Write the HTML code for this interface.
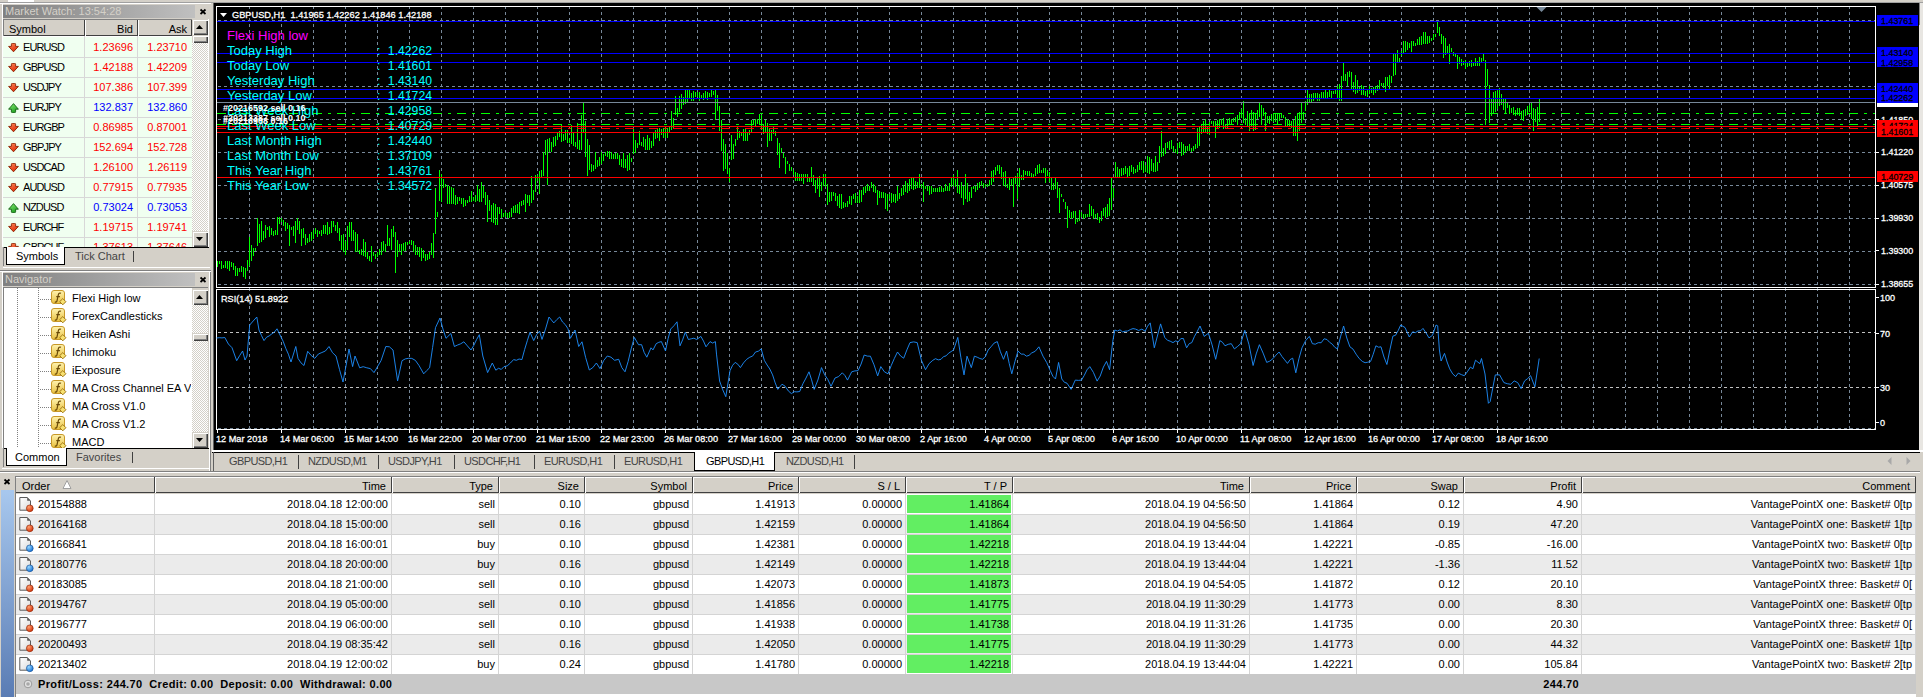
<!DOCTYPE html><html><head><meta charset="utf-8"><style>
html,body{margin:0;padding:0;}
body{width:1923px;height:697px;overflow:hidden;position:relative;background:#d4d0c8;font-family:"Liberation Sans", sans-serif;font-size:11px;color:#000;}
.t{font-size:11px;line-height:13px;}
svg{position:absolute;}

</style></head><body>
<div style="position:absolute;left:8px;top:0px;width:26px;height:2px;background:#fff"></div>
<div style="position:absolute;left:0px;top:2px;width:1923px;height:1px;background:#a0a0a0"></div>
<div style="position:absolute;left:0px;top:3px;width:211px;height:1px;background:#fff"></div>
<div style="position:absolute;left:3px;top:5px;width:192px;height:13px;background:linear-gradient(to right,#808080,#c0c0c0)"></div>
<div style="position:absolute;left:5px;top:5px;white-space:nowrap;color:#d4d0c8;font-size:11px;line-height:13px">Market Watch: 13:54:28</div>
<svg style="left:199px;top:8px" width="9" height="8"><path d="M1.5 1.5l5 4.5M6.5 1.5l-5 4.5" stroke="#000" stroke-width="1.7"/></svg>
<div style="position:absolute;left:2px;top:4px;width:1px;height:243px;background:#fff"></div>
<div style="position:absolute;left:3px;top:19px;width:189px;height:17px;background:#d4d0c8;box-shadow:inset 1px 1px 0 #fff, inset -1px -1px 0 #404040"></div>
<div style="position:absolute;left:84px;top:19px;width:1px;height:17px;background:#404040"></div>
<div style="position:absolute;left:85px;top:19px;width:1px;height:17px;background:#fff"></div>
<div style="position:absolute;left:137px;top:19px;width:1px;height:17px;background:#404040"></div>
<div style="position:absolute;left:138px;top:19px;width:1px;height:17px;background:#fff"></div>
<div class="t" style="position:absolute;left:9px;top:23px;white-space:nowrap;">Symbol</div>
<div class="t" style="position:absolute;right:1790px;top:23px;white-space:nowrap;text-align:right;">Bid</div>
<div class="t" style="position:absolute;right:1736px;top:23px;white-space:nowrap;text-align:right;">Ask</div>
<div style="position:absolute;left:3px;top:19px;width:205px;height:1px;background:#808080"></div>
<div style="position:absolute;left:208px;top:19px;width:1px;height:228px;background:#fff"></div>
<div style="position:absolute;left:3px;top:19px;width:1px;height:228px;background:#808080"></div>
<div style="position:absolute;left:3px;top:36px;width:189px;height:211px;overflow:hidden;background:#f0fff0">
<div style="position:absolute;left:0;top:0;width:189px;height:1px;background:#fff"></div>
<div style="position:absolute;left:0;top:21px;width:189px;height:1px;background:#d8d8d8"></div>
<svg style="left:5px;top:7px" width="11" height="10" viewBox="0 0 11 10"><defs><linearGradient id="rg0" x1="0" y1="0" x2="0.6" y2="1"><stop offset="0" stop-color="#ff8a5a"/><stop offset="1" stop-color="#e02c08"/></linearGradient></defs><path d="M3.4 1.2q0-0.8 0.8-0.8h2.6q0.8 0 0.8 0.8V3.4H10.4L5.5 8.8L0.6 3.4H3.4z" fill="url(#rg0)" stroke="#8a2000" stroke-width="0.9" stroke-linejoin="round"/></svg>
<div class="t" style="position:absolute;left:20px;top:5px;letter-spacing:-0.9px">EURUSD</div>
<div class="t" style="position:absolute;right:59px;top:5px;color:#ff0000">1.23696</div>
<div class="t" style="position:absolute;right:5px;top:5px;color:#ff0000">1.23710</div>
<div style="position:absolute;left:0;top:41px;width:189px;height:1px;background:#d8d8d8"></div>
<svg style="left:5px;top:27px" width="11" height="10" viewBox="0 0 11 10"><defs><linearGradient id="rg1" x1="0" y1="0" x2="0.6" y2="1"><stop offset="0" stop-color="#ff8a5a"/><stop offset="1" stop-color="#e02c08"/></linearGradient></defs><path d="M3.4 1.2q0-0.8 0.8-0.8h2.6q0.8 0 0.8 0.8V3.4H10.4L5.5 8.8L0.6 3.4H3.4z" fill="url(#rg1)" stroke="#8a2000" stroke-width="0.9" stroke-linejoin="round"/></svg>
<div class="t" style="position:absolute;left:20px;top:25px;letter-spacing:-0.9px">GBPUSD</div>
<div class="t" style="position:absolute;right:59px;top:25px;color:#ff0000">1.42188</div>
<div class="t" style="position:absolute;right:5px;top:25px;color:#ff0000">1.42209</div>
<div style="position:absolute;left:0;top:61px;width:189px;height:1px;background:#d8d8d8"></div>
<svg style="left:5px;top:47px" width="11" height="10" viewBox="0 0 11 10"><defs><linearGradient id="rg2" x1="0" y1="0" x2="0.6" y2="1"><stop offset="0" stop-color="#ff8a5a"/><stop offset="1" stop-color="#e02c08"/></linearGradient></defs><path d="M3.4 1.2q0-0.8 0.8-0.8h2.6q0.8 0 0.8 0.8V3.4H10.4L5.5 8.8L0.6 3.4H3.4z" fill="url(#rg2)" stroke="#8a2000" stroke-width="0.9" stroke-linejoin="round"/></svg>
<div class="t" style="position:absolute;left:20px;top:45px;letter-spacing:-0.9px">USDJPY</div>
<div class="t" style="position:absolute;right:59px;top:45px;color:#ff0000">107.386</div>
<div class="t" style="position:absolute;right:5px;top:45px;color:#ff0000">107.399</div>
<div style="position:absolute;left:0;top:81px;width:189px;height:1px;background:#d8d8d8"></div>
<svg style="left:5px;top:67px" width="11" height="10" viewBox="0 0 11 10"><defs><linearGradient id="gg3" x1="0" y1="0" x2="0.6" y2="1"><stop offset="0" stop-color="#8aef7a"/><stop offset="1" stop-color="#20a020"/></linearGradient></defs><path d="M3.4 8.8q0 0.8 0.8 0.8h2.6q0.8 0 0.8-0.8V6.2H10.4L5.5 0.6L0.6 6.2H3.4z" fill="url(#gg3)" stroke="#106010" stroke-width="0.9" stroke-linejoin="round"/></svg>
<div class="t" style="position:absolute;left:20px;top:65px;letter-spacing:-0.9px">EURJPY</div>
<div class="t" style="position:absolute;right:59px;top:65px;color:#0000ff">132.837</div>
<div class="t" style="position:absolute;right:5px;top:65px;color:#0000ff">132.860</div>
<div style="position:absolute;left:0;top:101px;width:189px;height:1px;background:#d8d8d8"></div>
<svg style="left:5px;top:87px" width="11" height="10" viewBox="0 0 11 10"><defs><linearGradient id="rg4" x1="0" y1="0" x2="0.6" y2="1"><stop offset="0" stop-color="#ff8a5a"/><stop offset="1" stop-color="#e02c08"/></linearGradient></defs><path d="M3.4 1.2q0-0.8 0.8-0.8h2.6q0.8 0 0.8 0.8V3.4H10.4L5.5 8.8L0.6 3.4H3.4z" fill="url(#rg4)" stroke="#8a2000" stroke-width="0.9" stroke-linejoin="round"/></svg>
<div class="t" style="position:absolute;left:20px;top:85px;letter-spacing:-0.9px">EURGBP</div>
<div class="t" style="position:absolute;right:59px;top:85px;color:#ff0000">0.86985</div>
<div class="t" style="position:absolute;right:5px;top:85px;color:#ff0000">0.87001</div>
<div style="position:absolute;left:0;top:121px;width:189px;height:1px;background:#d8d8d8"></div>
<svg style="left:5px;top:107px" width="11" height="10" viewBox="0 0 11 10"><defs><linearGradient id="rg5" x1="0" y1="0" x2="0.6" y2="1"><stop offset="0" stop-color="#ff8a5a"/><stop offset="1" stop-color="#e02c08"/></linearGradient></defs><path d="M3.4 1.2q0-0.8 0.8-0.8h2.6q0.8 0 0.8 0.8V3.4H10.4L5.5 8.8L0.6 3.4H3.4z" fill="url(#rg5)" stroke="#8a2000" stroke-width="0.9" stroke-linejoin="round"/></svg>
<div class="t" style="position:absolute;left:20px;top:105px;letter-spacing:-0.9px">GBPJPY</div>
<div class="t" style="position:absolute;right:59px;top:105px;color:#ff0000">152.694</div>
<div class="t" style="position:absolute;right:5px;top:105px;color:#ff0000">152.728</div>
<div style="position:absolute;left:0;top:141px;width:189px;height:1px;background:#d8d8d8"></div>
<svg style="left:5px;top:127px" width="11" height="10" viewBox="0 0 11 10"><defs><linearGradient id="rg6" x1="0" y1="0" x2="0.6" y2="1"><stop offset="0" stop-color="#ff8a5a"/><stop offset="1" stop-color="#e02c08"/></linearGradient></defs><path d="M3.4 1.2q0-0.8 0.8-0.8h2.6q0.8 0 0.8 0.8V3.4H10.4L5.5 8.8L0.6 3.4H3.4z" fill="url(#rg6)" stroke="#8a2000" stroke-width="0.9" stroke-linejoin="round"/></svg>
<div class="t" style="position:absolute;left:20px;top:125px;letter-spacing:-0.9px">USDCAD</div>
<div class="t" style="position:absolute;right:59px;top:125px;color:#ff0000">1.26100</div>
<div class="t" style="position:absolute;right:5px;top:125px;color:#ff0000">1.26119</div>
<div style="position:absolute;left:0;top:161px;width:189px;height:1px;background:#d8d8d8"></div>
<svg style="left:5px;top:147px" width="11" height="10" viewBox="0 0 11 10"><defs><linearGradient id="rg7" x1="0" y1="0" x2="0.6" y2="1"><stop offset="0" stop-color="#ff8a5a"/><stop offset="1" stop-color="#e02c08"/></linearGradient></defs><path d="M3.4 1.2q0-0.8 0.8-0.8h2.6q0.8 0 0.8 0.8V3.4H10.4L5.5 8.8L0.6 3.4H3.4z" fill="url(#rg7)" stroke="#8a2000" stroke-width="0.9" stroke-linejoin="round"/></svg>
<div class="t" style="position:absolute;left:20px;top:145px;letter-spacing:-0.9px">AUDUSD</div>
<div class="t" style="position:absolute;right:59px;top:145px;color:#ff0000">0.77915</div>
<div class="t" style="position:absolute;right:5px;top:145px;color:#ff0000">0.77935</div>
<div style="position:absolute;left:0;top:181px;width:189px;height:1px;background:#d8d8d8"></div>
<svg style="left:5px;top:167px" width="11" height="10" viewBox="0 0 11 10"><defs><linearGradient id="gg8" x1="0" y1="0" x2="0.6" y2="1"><stop offset="0" stop-color="#8aef7a"/><stop offset="1" stop-color="#20a020"/></linearGradient></defs><path d="M3.4 8.8q0 0.8 0.8 0.8h2.6q0.8 0 0.8-0.8V6.2H10.4L5.5 0.6L0.6 6.2H3.4z" fill="url(#gg8)" stroke="#106010" stroke-width="0.9" stroke-linejoin="round"/></svg>
<div class="t" style="position:absolute;left:20px;top:165px;letter-spacing:-0.9px">NZDUSD</div>
<div class="t" style="position:absolute;right:59px;top:165px;color:#0000ff">0.73024</div>
<div class="t" style="position:absolute;right:5px;top:165px;color:#0000ff">0.73053</div>
<div style="position:absolute;left:0;top:201px;width:189px;height:1px;background:#d8d8d8"></div>
<svg style="left:5px;top:187px" width="11" height="10" viewBox="0 0 11 10"><defs><linearGradient id="rg9" x1="0" y1="0" x2="0.6" y2="1"><stop offset="0" stop-color="#ff8a5a"/><stop offset="1" stop-color="#e02c08"/></linearGradient></defs><path d="M3.4 1.2q0-0.8 0.8-0.8h2.6q0.8 0 0.8 0.8V3.4H10.4L5.5 8.8L0.6 3.4H3.4z" fill="url(#rg9)" stroke="#8a2000" stroke-width="0.9" stroke-linejoin="round"/></svg>
<div class="t" style="position:absolute;left:20px;top:185px;letter-spacing:-0.9px">EURCHF</div>
<div class="t" style="position:absolute;right:59px;top:185px;color:#ff0000">1.19715</div>
<div class="t" style="position:absolute;right:5px;top:185px;color:#ff0000">1.19741</div>
<div style="position:absolute;left:0;top:221px;width:189px;height:1px;background:#d8d8d8"></div>
<svg style="left:5px;top:207px" width="11" height="10" viewBox="0 0 11 10"><defs><linearGradient id="rg10" x1="0" y1="0" x2="0.6" y2="1"><stop offset="0" stop-color="#ff8a5a"/><stop offset="1" stop-color="#e02c08"/></linearGradient></defs><path d="M3.4 1.2q0-0.8 0.8-0.8h2.6q0.8 0 0.8 0.8V3.4H10.4L5.5 8.8L0.6 3.4H3.4z" fill="url(#rg10)" stroke="#8a2000" stroke-width="0.9" stroke-linejoin="round"/></svg>
<div class="t" style="position:absolute;left:20px;top:205px;letter-spacing:-0.9px">GBPCHF</div>
<div class="t" style="position:absolute;right:59px;top:205px;color:#ff0000">1.37613</div>
<div class="t" style="position:absolute;right:5px;top:205px;color:#ff0000">1.37646</div>
<div style="position:absolute;left:81px;top:0;width:1px;height:211px;background:#d8d8d8"></div>
<div style="position:absolute;left:134px;top:0;width:1px;height:211px;background:#d8d8d8"></div>
</div>
<div style="position:absolute;left:192px;top:19px;width:16px;height:228px;background-color:#ece9e4;background-image:repeating-conic-gradient(#d4d0c8 0 25%, #fff 0 50%);background-size:2px 2px"></div>
<div style="position:absolute;left:192px;top:19px;width:16px;height:16px;background:#d4d0c8;box-shadow:inset 1px 1px 0 #d4d0c8, inset 2px 2px 0 #fff, inset -1px -1px 0 #404040, inset -2px -2px 0 #808080"></div>
<svg style="left:192px;top:19px" width="16" height="16"><path d="M4 10h7l-3.5-4z" fill="#000"/></svg>
<div style="position:absolute;left:192px;top:231px;width:16px;height:16px;background:#d4d0c8;box-shadow:inset 1px 1px 0 #d4d0c8, inset 2px 2px 0 #fff, inset -1px -1px 0 #404040, inset -2px -2px 0 #808080"></div>
<svg style="left:192px;top:231px" width="16" height="16"><path d="M4 6h7l-3.5 4z" fill="#000"/></svg>
<div style="position:absolute;left:192px;top:35px;width:16px;height:8px;background:#d4d0c8;box-shadow:inset 1px 1px 0 #d4d0c8, inset 2px 2px 0 #fff, inset -1px -1px 0 #404040, inset -2px -2px 0 #808080"></div>
<div style="position:absolute;left:3px;top:247px;width:206px;height:1px;background:#000"></div>
<div style="position:absolute;left:3px;top:247px;width:1px;height:19px;background:#808080"></div>
<div style="position:absolute;left:6px;top:247px;width:59px;height:18px;background:#fff;border:1px solid #000;border-top:none;box-sizing:border-box"></div>
<div class="t" style="position:absolute;left:16px;top:250px;white-space:nowrap;">Symbols</div>
<div class="t" style="position:absolute;left:75px;top:250px;white-space:nowrap;color:#444">Tick Chart</div>
<div style="position:absolute;left:133px;top:251px;width:1px;height:11px;background:#404040"></div>
<div style="position:absolute;left:3px;top:267px;width:207px;height:1px;background:#fff"></div>
<div style="position:absolute;left:0px;top:270px;width:211px;height:1px;background:#808080"></div>
<div style="position:absolute;left:0px;top:271px;width:211px;height:1px;background:#fff"></div>
<div style="position:absolute;left:3px;top:273px;width:192px;height:13px;background:linear-gradient(to right,#808080,#c0c0c0)"></div>
<div style="position:absolute;left:5px;top:273px;white-space:nowrap;color:#d4d0c8;font-size:11px;line-height:13px">Navigator</div>
<svg style="left:199px;top:276px" width="9" height="8"><path d="M1.5 1.5l5 4.5M6.5 1.5l-5 4.5" stroke="#000" stroke-width="1.7"/></svg>
<div style="position:absolute;left:2px;top:272px;width:1px;height:176px;background:#fff"></div>
<div style="position:absolute;left:209px;top:272px;width:1px;height:200px;background:#fff"></div>
<div style="position:absolute;left:210px;top:272px;width:1px;height:200px;background:#808080"></div>
<div style="position:absolute;left:3px;top:288px;width:189px;height:160px;background:#fff"></div>
<div style="position:absolute;left:3px;top:287px;width:205px;height:1px;background:#808080"></div>
<div style="position:absolute;left:3px;top:287px;width:1px;height:161px;background:#808080"></div>
<svg style="left:0;top:288px" width="192" height="160">
<path d="M17.5 0V160M38.5 0V160" stroke="#808080" stroke-width="1" stroke-dasharray="1 1"/>
<path d="M40 11.5H51" stroke="#808080" stroke-dasharray="1 1"/>
<path d="M40 29.5H51" stroke="#808080" stroke-dasharray="1 1"/>
<path d="M40 47.5H51" stroke="#808080" stroke-dasharray="1 1"/>
<path d="M40 65.5H51" stroke="#808080" stroke-dasharray="1 1"/>
<path d="M40 83.5H51" stroke="#808080" stroke-dasharray="1 1"/>
<path d="M40 101.5H51" stroke="#808080" stroke-dasharray="1 1"/>
<path d="M40 119.5H51" stroke="#808080" stroke-dasharray="1 1"/>
<path d="M40 137.5H51" stroke="#808080" stroke-dasharray="1 1"/>
<path d="M40 155.5H51" stroke="#808080" stroke-dasharray="1 1"/>
</svg>
<svg style="left:51px;top:290px" width="17" height="17" viewBox="0 0 17 17"><defs><linearGradient id="yg" x1="0" y1="0" x2="0" y2="1"><stop offset="0" stop-color="#fff3b0"/><stop offset="1" stop-color="#e8c040"/></linearGradient></defs><rect x="0.5" y="0.5" width="13" height="13" rx="2.5" fill="url(#yg)" stroke="#c89828"/><path d="M10 3.3c-1.4-0.7-2.4 0-2.7 1.5l-1.3 6c-0.3 1.2-1.1 1.6-2.2 1.1M5.3 6.6h3.6" stroke="#6a4a08" stroke-width="1.2" fill="none"/><path d="M11.8 8.6l3.1 3.1-3.1 3.1-3.1-3.1z" fill="#f8e070" stroke="#a07818" stroke-width="1"/></svg>
<div class="t" style="position:absolute;left:72px;top:292px;width:119px;overflow:hidden;white-space:nowrap">Flexi High low</div>
<svg style="left:51px;top:308px" width="17" height="17" viewBox="0 0 17 17"><defs><linearGradient id="yg" x1="0" y1="0" x2="0" y2="1"><stop offset="0" stop-color="#fff3b0"/><stop offset="1" stop-color="#e8c040"/></linearGradient></defs><rect x="0.5" y="0.5" width="13" height="13" rx="2.5" fill="url(#yg)" stroke="#c89828"/><path d="M10 3.3c-1.4-0.7-2.4 0-2.7 1.5l-1.3 6c-0.3 1.2-1.1 1.6-2.2 1.1M5.3 6.6h3.6" stroke="#6a4a08" stroke-width="1.2" fill="none"/><path d="M11.8 8.6l3.1 3.1-3.1 3.1-3.1-3.1z" fill="#f8e070" stroke="#a07818" stroke-width="1"/></svg>
<div class="t" style="position:absolute;left:72px;top:310px;width:119px;overflow:hidden;white-space:nowrap">ForexCandlesticks</div>
<svg style="left:51px;top:326px" width="17" height="17" viewBox="0 0 17 17"><defs><linearGradient id="yg" x1="0" y1="0" x2="0" y2="1"><stop offset="0" stop-color="#fff3b0"/><stop offset="1" stop-color="#e8c040"/></linearGradient></defs><rect x="0.5" y="0.5" width="13" height="13" rx="2.5" fill="url(#yg)" stroke="#c89828"/><path d="M10 3.3c-1.4-0.7-2.4 0-2.7 1.5l-1.3 6c-0.3 1.2-1.1 1.6-2.2 1.1M5.3 6.6h3.6" stroke="#6a4a08" stroke-width="1.2" fill="none"/><path d="M11.8 8.6l3.1 3.1-3.1 3.1-3.1-3.1z" fill="#f8e070" stroke="#a07818" stroke-width="1"/></svg>
<div class="t" style="position:absolute;left:72px;top:328px;width:119px;overflow:hidden;white-space:nowrap">Heiken Ashi</div>
<svg style="left:51px;top:344px" width="17" height="17" viewBox="0 0 17 17"><defs><linearGradient id="yg" x1="0" y1="0" x2="0" y2="1"><stop offset="0" stop-color="#fff3b0"/><stop offset="1" stop-color="#e8c040"/></linearGradient></defs><rect x="0.5" y="0.5" width="13" height="13" rx="2.5" fill="url(#yg)" stroke="#c89828"/><path d="M10 3.3c-1.4-0.7-2.4 0-2.7 1.5l-1.3 6c-0.3 1.2-1.1 1.6-2.2 1.1M5.3 6.6h3.6" stroke="#6a4a08" stroke-width="1.2" fill="none"/><path d="M11.8 8.6l3.1 3.1-3.1 3.1-3.1-3.1z" fill="#f8e070" stroke="#a07818" stroke-width="1"/></svg>
<div class="t" style="position:absolute;left:72px;top:346px;width:119px;overflow:hidden;white-space:nowrap">Ichimoku</div>
<svg style="left:51px;top:362px" width="17" height="17" viewBox="0 0 17 17"><defs><linearGradient id="yg" x1="0" y1="0" x2="0" y2="1"><stop offset="0" stop-color="#fff3b0"/><stop offset="1" stop-color="#e8c040"/></linearGradient></defs><rect x="0.5" y="0.5" width="13" height="13" rx="2.5" fill="url(#yg)" stroke="#c89828"/><path d="M10 3.3c-1.4-0.7-2.4 0-2.7 1.5l-1.3 6c-0.3 1.2-1.1 1.6-2.2 1.1M5.3 6.6h3.6" stroke="#6a4a08" stroke-width="1.2" fill="none"/><path d="M11.8 8.6l3.1 3.1-3.1 3.1-3.1-3.1z" fill="#f8e070" stroke="#a07818" stroke-width="1"/></svg>
<div class="t" style="position:absolute;left:72px;top:364px;width:119px;overflow:hidden;white-space:nowrap">iExposure</div>
<svg style="left:51px;top:380px" width="17" height="17" viewBox="0 0 17 17"><defs><linearGradient id="yg" x1="0" y1="0" x2="0" y2="1"><stop offset="0" stop-color="#fff3b0"/><stop offset="1" stop-color="#e8c040"/></linearGradient></defs><rect x="0.5" y="0.5" width="13" height="13" rx="2.5" fill="url(#yg)" stroke="#c89828"/><path d="M10 3.3c-1.4-0.7-2.4 0-2.7 1.5l-1.3 6c-0.3 1.2-1.1 1.6-2.2 1.1M5.3 6.6h3.6" stroke="#6a4a08" stroke-width="1.2" fill="none"/><path d="M11.8 8.6l3.1 3.1-3.1 3.1-3.1-3.1z" fill="#f8e070" stroke="#a07818" stroke-width="1"/></svg>
<div class="t" style="position:absolute;left:72px;top:382px;width:119px;overflow:hidden;white-space:nowrap">MA Cross Channel EA V1.0</div>
<svg style="left:51px;top:398px" width="17" height="17" viewBox="0 0 17 17"><defs><linearGradient id="yg" x1="0" y1="0" x2="0" y2="1"><stop offset="0" stop-color="#fff3b0"/><stop offset="1" stop-color="#e8c040"/></linearGradient></defs><rect x="0.5" y="0.5" width="13" height="13" rx="2.5" fill="url(#yg)" stroke="#c89828"/><path d="M10 3.3c-1.4-0.7-2.4 0-2.7 1.5l-1.3 6c-0.3 1.2-1.1 1.6-2.2 1.1M5.3 6.6h3.6" stroke="#6a4a08" stroke-width="1.2" fill="none"/><path d="M11.8 8.6l3.1 3.1-3.1 3.1-3.1-3.1z" fill="#f8e070" stroke="#a07818" stroke-width="1"/></svg>
<div class="t" style="position:absolute;left:72px;top:400px;width:119px;overflow:hidden;white-space:nowrap">MA Cross V1.0</div>
<svg style="left:51px;top:416px" width="17" height="17" viewBox="0 0 17 17"><defs><linearGradient id="yg" x1="0" y1="0" x2="0" y2="1"><stop offset="0" stop-color="#fff3b0"/><stop offset="1" stop-color="#e8c040"/></linearGradient></defs><rect x="0.5" y="0.5" width="13" height="13" rx="2.5" fill="url(#yg)" stroke="#c89828"/><path d="M10 3.3c-1.4-0.7-2.4 0-2.7 1.5l-1.3 6c-0.3 1.2-1.1 1.6-2.2 1.1M5.3 6.6h3.6" stroke="#6a4a08" stroke-width="1.2" fill="none"/><path d="M11.8 8.6l3.1 3.1-3.1 3.1-3.1-3.1z" fill="#f8e070" stroke="#a07818" stroke-width="1"/></svg>
<div class="t" style="position:absolute;left:72px;top:418px;width:119px;overflow:hidden;white-space:nowrap">MA Cross V1.2</div>
<svg style="left:51px;top:434px" width="17" height="17" viewBox="0 0 17 17"><defs><linearGradient id="yg" x1="0" y1="0" x2="0" y2="1"><stop offset="0" stop-color="#fff3b0"/><stop offset="1" stop-color="#e8c040"/></linearGradient></defs><rect x="0.5" y="0.5" width="13" height="13" rx="2.5" fill="url(#yg)" stroke="#c89828"/><path d="M10 3.3c-1.4-0.7-2.4 0-2.7 1.5l-1.3 6c-0.3 1.2-1.1 1.6-2.2 1.1M5.3 6.6h3.6" stroke="#6a4a08" stroke-width="1.2" fill="none"/><path d="M11.8 8.6l3.1 3.1-3.1 3.1-3.1-3.1z" fill="#f8e070" stroke="#a07818" stroke-width="1"/></svg>
<div class="t" style="position:absolute;left:72px;top:436px;width:119px;overflow:hidden;white-space:nowrap">MACD</div>
<div style="position:absolute;left:192px;top:289px;width:16px;height:159px;background-color:#ece9e4;background-image:repeating-conic-gradient(#d4d0c8 0 25%, #fff 0 50%);background-size:2px 2px"></div>
<div style="position:absolute;left:192px;top:289px;width:16px;height:16px;background:#d4d0c8;box-shadow:inset 1px 1px 0 #d4d0c8, inset 2px 2px 0 #fff, inset -1px -1px 0 #404040, inset -2px -2px 0 #808080"></div>
<svg style="left:192px;top:289px" width="16" height="16"><path d="M4 10h7l-3.5-4z" fill="#000"/></svg>
<div style="position:absolute;left:192px;top:432px;width:16px;height:16px;background:#d4d0c8;box-shadow:inset 1px 1px 0 #d4d0c8, inset 2px 2px 0 #fff, inset -1px -1px 0 #404040, inset -2px -2px 0 #808080"></div>
<svg style="left:192px;top:432px" width="16" height="16"><path d="M4 6h7l-3.5 4z" fill="#000"/></svg>
<div style="position:absolute;left:192px;top:333px;width:16px;height:8px;background:#d4d0c8;box-shadow:inset 1px 1px 0 #d4d0c8, inset 2px 2px 0 #fff, inset -1px -1px 0 #404040, inset -2px -2px 0 #808080"></div>
<div style="position:absolute;left:3px;top:448px;width:206px;height:1px;background:#000"></div>
<div style="position:absolute;left:3px;top:448px;width:1px;height:19px;background:#808080"></div>
<div style="position:absolute;left:6px;top:448px;width:61px;height:18px;background:#fff;border:1px solid #000;border-top:none;box-sizing:border-box"></div>
<div class="t" style="position:absolute;left:15px;top:451px;white-space:nowrap;">Common</div>
<div class="t" style="position:absolute;left:76px;top:451px;white-space:nowrap;color:#444">Favorites</div>
<div style="position:absolute;left:132px;top:452px;width:1px;height:11px;background:#404040"></div>
<div style="position:absolute;left:2px;top:468px;width:208px;height:1px;background:#fff"></div>
<svg style="left:211px;top:3px" width="1712" height="447" viewBox="211 3 1712 447" shape-rendering="crispEdges">
<rect x="211" y="3" width="2" height="447" fill="#d4d0c8"/>
<rect x="213" y="3" width="1" height="447" fill="#606060"/>
<rect x="214" y="3" width="1705" height="447" fill="#000"/>
<rect x="1919" y="3" width="4" height="447" fill="#e8e6e2"/>
<rect x="1919" y="3" width="1" height="22" fill="#808080"/>
<path d="M249.5 6V287M281.5 6V287M313.5 6V287M345.5 6V287M377.5 6V287M409.5 6V287M441.5 6V287M473.5 6V287M505.5 6V287M537.5 6V287M569.5 6V287M601.5 6V287M633.5 6V287M665.5 6V287M697.5 6V287M729.5 6V287M761.5 6V287M793.5 6V287M825.5 6V287M857.5 6V287M889.5 6V287M921.5 6V287M953.5 6V287M985.5 6V287M1017.5 6V287M1049.5 6V287M1081.5 6V287M1113.5 6V287M1145.5 6V287M1177.5 6V287M1209.5 6V287M1241.5 6V287M1273.5 6V287M1305.5 6V287M1337.5 6V287M1369.5 6V287M1401.5 6V287M1433.5 6V287M1465.5 6V287M1497.5 6V287M1529.5 6V287M1561.5 6V287M1593.5 6V287M1625.5 6V287M1657.5 6V287M1689.5 6V287M1721.5 6V287M1753.5 6V287M1785.5 6V287M1817.5 6V287M1849.5 6V287" stroke="#778899" stroke-dasharray="3 3" fill="none"/>
<path d="M249.5 288V429M281.5 288V429M313.5 288V429M345.5 288V429M377.5 288V429M409.5 288V429M441.5 288V429M473.5 288V429M505.5 288V429M537.5 288V429M569.5 288V429M601.5 288V429M633.5 288V429M665.5 288V429M697.5 288V429M729.5 288V429M761.5 288V429M793.5 288V429M825.5 288V429M857.5 288V429M889.5 288V429M921.5 288V429M953.5 288V429M985.5 288V429M1017.5 288V429M1049.5 288V429M1081.5 288V429M1113.5 288V429M1145.5 288V429M1177.5 288V429M1209.5 288V429M1241.5 288V429M1273.5 288V429M1305.5 288V429M1337.5 288V429M1369.5 288V429M1401.5 288V429M1433.5 288V429M1465.5 288V429M1497.5 288V429M1529.5 288V429M1561.5 288V429M1593.5 288V429M1625.5 288V429M1657.5 288V429M1689.5 288V429M1721.5 288V429M1753.5 288V429M1785.5 288V429M1817.5 288V429M1849.5 288V429" stroke="#778899" stroke-dasharray="3 3" fill="none"/>
<path d="M218 20.5H1875M218 53.5H1875M218 86.5H1875M218 119.5H1875M218 152.5H1875M218 185.5H1875M218 218.5H1875M218 251.5H1875M218 284.5H1875" stroke="#778899" stroke-dasharray="3 3" fill="none"/>
<path d="M218 332.5H1875M218 387.5H1875" stroke="#c0c0c0" stroke-dasharray="3 3" fill="none"/>
<path d="M218 428.5H1875" stroke="#778899" stroke-dasharray="3 3" fill="none"/>
<path d="M217.5 261V267M219.5 261V264M221.5 261V269M223.5 265V268M225.5 261V268M227.5 261V269M229.5 261V271M231.5 262V267M233.5 263V270M235.5 266V276M237.5 268V276M239.5 268V272M241.5 266V272M243.5 267V277M245.5 268V279M247.5 260V271M249.5 237V266M251.5 245V261M253.5 248V256M255.5 248V251M257.5 218V246M259.5 224V243M261.5 221V242M263.5 231V240M265.5 225V238M267.5 227V230M269.5 226V237M271.5 228V235M273.5 231V236M275.5 230V235M277.5 217V235M279.5 217V224M281.5 218V222M283.5 220V226M285.5 222V231M287.5 223V229M289.5 225V246M291.5 227V230M293.5 226V236M295.5 221V243M297.5 218V230M299.5 221V234M301.5 229V246M303.5 228V238M305.5 234V245M307.5 238V243M309.5 234V242M311.5 232V241M313.5 230V239M315.5 228V234M317.5 230V237M319.5 231V234M321.5 230V236M323.5 225V234M325.5 225V234M327.5 222V235M329.5 227V234M331.5 221V233M333.5 221V227M335.5 225V231M337.5 222V233M339.5 228V241M341.5 235V250M343.5 234V252M345.5 241V255M347.5 226V250M349.5 222V237M351.5 222V241M353.5 230V241M355.5 232V252M357.5 234V252M359.5 250V254M361.5 249V255M363.5 239V256M365.5 242V257M367.5 252V259M369.5 256V261M371.5 246V262M373.5 252V256M375.5 254V259M377.5 252V257M379.5 249V255M381.5 242V255M383.5 241V251M385.5 244V252M387.5 225V246M389.5 238V246M391.5 229V250M393.5 226V237M395.5 232V273M397.5 240V257M399.5 244V252M401.5 244V255M403.5 243V251M405.5 242V251M407.5 242V245M409.5 241V244M411.5 240V245M413.5 241V252M415.5 245V255M417.5 247V255M419.5 247V257M421.5 248V261M423.5 250V258M425.5 254V261M427.5 254V260M429.5 252V259M431.5 243V255M433.5 233V258M435.5 188V234M437.5 212V217M439.5 170V201M441.5 174V202M443.5 179V188M445.5 184V187M447.5 185V204M449.5 186V204M451.5 187V204M453.5 188V204M455.5 195V205M457.5 197V204M459.5 197V201M461.5 198V204M463.5 198V207M465.5 200V206M467.5 200V203M469.5 196V202M471.5 191V202M473.5 197V201M475.5 195V202M477.5 185V201M479.5 189V202M481.5 182V202M483.5 186V198M485.5 192V205M487.5 195V222M489.5 200V211M491.5 205V222M493.5 203V223M495.5 204V225M497.5 207V225M499.5 207V214M501.5 209V218M503.5 213V217M505.5 212V217M507.5 213V218M509.5 212V218M511.5 208V217M513.5 206V213M515.5 205V213M517.5 204V213M519.5 202V214M521.5 201V206M523.5 200V205M525.5 194V212M527.5 195V203M529.5 195V206M531.5 176V203M533.5 190V200M535.5 175V192M537.5 175V181M539.5 171V194M541.5 170V177M543.5 152V176M545.5 140V155M547.5 139V185M549.5 138V152M551.5 142V152M553.5 137V147M555.5 136V146M557.5 132V140M559.5 131V137M561.5 125V142M563.5 134V141M565.5 130V140M567.5 130V143M569.5 138V143M571.5 125V144M573.5 133V146M575.5 142V147M577.5 123V149M579.5 140V150M581.5 115V150M583.5 103V132M585.5 121V157M587.5 139V176M589.5 145V170M591.5 164V172M593.5 165V171M595.5 152V169M597.5 160V167M599.5 157V166M601.5 152V164M603.5 154V161M605.5 152V156M607.5 151V157M609.5 151V159M611.5 152V159M613.5 154V159M615.5 153V159M617.5 153V159M619.5 155V165M621.5 159V167M623.5 153V168M625.5 159V168M627.5 155V171M629.5 153V170M631.5 158V162M633.5 129V154M635.5 140V153M637.5 143V148M639.5 131V145M641.5 142V146M643.5 137V147M645.5 139V150M647.5 135V150M649.5 138V150M651.5 141V148M653.5 133V146M655.5 130V139M657.5 128V138M659.5 128V141M661.5 129V135M663.5 128V138M665.5 126V138M667.5 128V138M669.5 126V133M671.5 111V130M673.5 118V129M675.5 96V115M677.5 108V117M679.5 96V112M681.5 94V109M683.5 97V105M685.5 90V104M687.5 89V102M689.5 90V98M691.5 93V101M693.5 91V101M695.5 92V97M697.5 92V97M699.5 92V101M701.5 95V99M703.5 93V100M705.5 91V99M707.5 92V100M709.5 93V97M711.5 90V97M713.5 91V95M715.5 90V120M717.5 95V111M719.5 106V131M721.5 120V151M723.5 139V171M725.5 144V169M727.5 153V174M729.5 168V182M731.5 135V160M733.5 144V159M735.5 139V146M737.5 126V140M739.5 131V138M741.5 133V136M743.5 129V141M745.5 129V141M747.5 132V141M749.5 130V135M751.5 120V133M753.5 120V125M755.5 119V127M757.5 119V124M759.5 114V125M761.5 115V130M763.5 124V134M765.5 120V132M767.5 123V147M769.5 128V141M771.5 130V141M773.5 126V134M775.5 131V136M777.5 138V155M779.5 143V168M781.5 148V153M783.5 153V158M785.5 157V174M787.5 161V164M789.5 164V171M791.5 167V171M793.5 170V175M795.5 172V181M797.5 173V181M799.5 174V181M801.5 174V181M803.5 174V184M805.5 174V178M807.5 174V182M809.5 177V182M811.5 167V182M813.5 175V186M815.5 180V193M817.5 178V189M819.5 176V197M821.5 182V191M823.5 174V186M825.5 174V187M827.5 184V205M829.5 192V202M831.5 192V201M833.5 192V196M835.5 193V201M837.5 196V206M839.5 194V208M841.5 194V209M843.5 202V208M845.5 203V207M847.5 201V207M849.5 196V204M851.5 196V205M853.5 194V199M855.5 193V203M857.5 196V203M859.5 190V203M861.5 190V202M863.5 187V195M865.5 186V193M867.5 184V191M869.5 186V191M871.5 182V188M873.5 184V192M875.5 186V193M877.5 190V205M879.5 191V198M881.5 192V198M883.5 192V198M885.5 193V209M887.5 194V211M889.5 194V199M891.5 193V203M893.5 194V202M895.5 194V203M897.5 186V201M899.5 193V199M901.5 188V196M903.5 185V195M905.5 181V192M907.5 183V193M909.5 179V191M911.5 178V189M913.5 177V190M915.5 181V189M917.5 182V188M919.5 174V188M921.5 184V188M923.5 182V202M925.5 186V189M927.5 186V191M929.5 186V195M931.5 186V194M933.5 188V192M935.5 188V192M937.5 188V192M939.5 187V192M941.5 186V192M943.5 188V192M945.5 184V191M947.5 186V191M949.5 183V191M951.5 177V187M953.5 175V186M955.5 179V187M957.5 170V193M959.5 185V194M961.5 182V198M963.5 186V205M965.5 174V199M967.5 183V202M969.5 192V201M971.5 187V198M973.5 186V189M975.5 186V192M977.5 183V190M979.5 182V188M981.5 181V186M983.5 183V188M985.5 184V187M987.5 184V187M989.5 180V186M991.5 171V185M993.5 170V182M995.5 167V175M997.5 165V171M999.5 165V174M1001.5 167V179M1003.5 172V186M1005.5 171V187M1007.5 184V188M1009.5 178V190M1011.5 179V186M1013.5 177V207M1015.5 176V184M1017.5 173V199M1019.5 168V187M1021.5 175V180M1023.5 170V180M1025.5 171V175M1027.5 171V176M1029.5 171V176M1031.5 173V177M1033.5 174V177M1035.5 168V176M1037.5 165V174M1039.5 164V173M1041.5 170V173M1043.5 168V173M1045.5 168V183M1047.5 170V176M1049.5 172V182M1051.5 177V190M1053.5 183V190M1055.5 178V189M1057.5 182V198M1059.5 188V213M1061.5 194V197M1063.5 199V202M1065.5 202V209M1067.5 206V228M1069.5 210V218M1071.5 212V219M1073.5 211V218M1075.5 211V224M1077.5 218V222M1079.5 210V221M1081.5 212V217M1083.5 214V219M1085.5 214V218M1087.5 214V217M1089.5 204V217M1091.5 206V216M1093.5 209V219M1095.5 214V218M1097.5 213V220M1099.5 217V223M1101.5 211V221M1103.5 208V216M1105.5 207V218M1107.5 204V217M1109.5 198V216M1111.5 177V210M1113.5 188V198M1115.5 162V178M1117.5 167V178M1119.5 169V178M1121.5 168V176M1123.5 168V175M1125.5 166V174M1127.5 168V177M1129.5 166V176M1131.5 165V172M1133.5 167V174M1135.5 169V173M1137.5 165V172M1139.5 162V170M1141.5 161V170M1143.5 161V173M1145.5 165V172M1147.5 156V173M1149.5 157V174M1151.5 159V171M1153.5 163V172M1155.5 156V172M1157.5 162V171M1159.5 146V163M1161.5 131V157M1163.5 148V156M1165.5 143V154M1167.5 142V148M1169.5 141V150M1171.5 140V149M1173.5 146V152M1175.5 149V153M1177.5 143V154M1179.5 142V148M1181.5 142V156M1183.5 144V155M1185.5 146V153M1187.5 146V151M1189.5 144V151M1191.5 148V152M1193.5 146V151M1195.5 144V149M1197.5 128V148M1199.5 126V146M1201.5 124V134M1203.5 121V133M1205.5 119V133M1207.5 126V134M1209.5 122V135M1211.5 121V124M1213.5 121V127M1215.5 121V138M1217.5 120V129M1219.5 119V128M1221.5 119V125M1223.5 118V129M1225.5 125V129M1227.5 119V128M1229.5 118V125M1231.5 119V125M1233.5 118V122M1235.5 117V122M1237.5 115V125M1239.5 112V120M1241.5 109V118M1243.5 101V123M1245.5 118V125M1247.5 111V126M1249.5 114V131M1251.5 110V127M1253.5 112V131M1255.5 113V130M1257.5 110V119M1259.5 103V117M1261.5 105V125M1263.5 108V116M1265.5 112V131M1267.5 116V123M1269.5 116V124M1271.5 114V121M1273.5 114V122M1275.5 113V122M1277.5 114V125M1279.5 113V121M1281.5 114V118M1283.5 115V118M1285.5 117V126M1287.5 119V127M1289.5 120V127M1291.5 121V128M1293.5 120V136M1295.5 116V136M1297.5 113V141M1299.5 112V131M1301.5 103V123M1303.5 112V120M1305.5 101V111M1307.5 90V105M1309.5 94V102M1311.5 94V102M1313.5 93V101M1315.5 93V98M1317.5 93V101M1319.5 94V101M1321.5 92V99M1323.5 92V99M1325.5 90V98M1327.5 92V98M1329.5 90V97M1331.5 91V99M1333.5 91V94M1335.5 90V94M1337.5 86V98M1339.5 84V101M1341.5 76V101M1343.5 62V81M1345.5 74V81M1347.5 72V86M1349.5 71V77M1351.5 72V89M1353.5 82V92M1355.5 75V94M1357.5 80V93M1359.5 87V91M1361.5 85V95M1363.5 86V95M1365.5 91V96M1367.5 89V97M1369.5 86V94M1371.5 88V93M1373.5 87V95M1375.5 86V93M1377.5 85V91M1379.5 80V89M1381.5 83V86M1383.5 83V88M1385.5 77V92M1387.5 77V86M1389.5 75V89M1391.5 76V83M1393.5 54V76M1395.5 54V75M1397.5 50V63M1399.5 58V62M1401.5 51V56M1403.5 41V53M1405.5 41V52M1407.5 42V50M1409.5 43V48M1411.5 41V52M1413.5 41V46M1415.5 43V46M1417.5 39V45M1419.5 37V45M1421.5 36V45M1423.5 32V44M1425.5 32V44M1427.5 36V44M1429.5 36V43M1431.5 38V41M1433.5 34V40M1435.5 34V37M1437.5 22V33M1439.5 27V36M1441.5 34V44M1443.5 36V58M1445.5 38V55M1447.5 46V54M1449.5 44V64M1451.5 48V52M1453.5 52V56M1455.5 54V57M1457.5 55V69M1459.5 57V64M1461.5 59V66M1463.5 61V65M1465.5 60V69M1467.5 62V67M1469.5 61V66M1471.5 60V67M1473.5 62V66M1475.5 58V66M1477.5 61V66M1479.5 57V66M1481.5 58V62M1483.5 54V61M1485.5 60V125M1487.5 69V86M1489.5 85V123M1491.5 99V116M1493.5 92V113M1495.5 91V112M1497.5 90V109M1499.5 88V106M1501.5 94V105M1503.5 98V110M1505.5 99V114M1507.5 103V108M1509.5 105V114M1511.5 108V113M1513.5 107V115M1515.5 110V116M1517.5 108V115M1519.5 108V116M1521.5 111V120M1523.5 110V121M1525.5 109V116M1527.5 106V115M1529.5 105V112M1531.5 103V119M1533.5 108V131M1535.5 109V122M1537.5 107V127M1539.5 99V122" stroke="#00ff00" fill="none"/>
<rect x="217" y="21" width="1658" height="1" fill="#0000ff"/>
<rect x="217" y="53" width="1658" height="1" fill="#0000ff"/>
<rect x="217" y="62" width="1658" height="1" fill="#0000ff"/>
<rect x="217" y="89" width="1658" height="1" fill="#0000ff"/>
<rect x="217" y="98" width="1658" height="1" fill="#0000ff"/>
<rect x="217" y="102" width="1658" height="1" fill="#778899"/>
<path d="M217 113.5H1875" stroke="#00ff00" stroke-dasharray="9 6 3 6" fill="none"/>
<path d="M217 124.5H1875" stroke="#00ff00" stroke-dasharray="9 6 3 6" fill="none"/>
<rect x="217" y="126" width="1658" height="1" fill="#ff0000"/>
<path d="M217 128.5H1875" stroke="#ff0000" stroke-dasharray="9 6 3 6" fill="none"/>
<rect x="217" y="132" width="1658" height="1" fill="#ff0000"/>
<rect x="217" y="177" width="1658" height="1" fill="#ff0000"/>
<rect x="216.5" y="6.5" width="1659" height="281" fill="none" stroke="#fff"/>
<rect x="216.5" y="289.5" width="1659" height="140" fill="none" stroke="#fff"/>
</svg>
<svg style="left:211px;top:3px" width="1712" height="447" viewBox="211 3 1712 447" font-family='"Liberation Sans", sans-serif'>
<polyline points="216.5,338.0 219.3,337.7 222.0,337.9 224.8,337.5 228.4,344.0 232.0,347.7 236.7,360.7 239.6,355.7 242.6,351.0 245.0,360.0 247.0,356.0 249.7,325.0 253.2,321.0 256.8,317.0 259.0,330.0 261.5,335.6 264.0,340.6 266.6,337.2 269.2,335.9 271.8,333.9 274.4,332.1 277.0,328.8 280.5,336.0 283.1,341.2 285.8,348.4 288.4,354.2 291.0,362.0 295.8,346.5 298.0,358.4 301.0,362.9 304.0,365.5 307.7,351.3 311.2,355.5 314.8,358.4 318.4,354.0 321.9,352.5 325.4,351.0 329.0,346.5 332.5,352.7 336.0,356.0 339.5,369.5 343.0,382.0 346.0,365.9 349.0,349.0 352.6,366.6 355.0,356.0 359.7,367.8 363.2,366.7 366.8,367.8 370.4,368.6 374.0,372.6 377.5,366.7 381.0,360.7 385.8,346.5 389.4,346.8 393.0,350.0 397.6,380.9 402.0,360.7 405.3,358.9 408.5,358.3 411.8,358.4 415.4,360.4 419.0,365.5 423.7,373.8 426.6,370.7 429.6,367.8 432.6,347.5 435.5,327.6 440.0,318.0 443.0,329.2 446.0,338.3 450.9,333.5 454.4,346.5 457.6,345.0 460.7,343.8 463.9,341.8 467.4,345.9 471.0,350.0 473.8,345.4 476.5,339.7 479.3,334.7 482.8,356.0 487.6,372.6 492.3,363.0 495.8,370.2 498.5,368.3 501.3,369.4 504.0,366.6 507.2,365.9 510.4,363.0 513.6,359.6 516.4,360.3 519.1,359.0 521.9,359.6 524.6,349.6 527.3,340.7 530.0,332.3 533.7,340.6 536.7,334.5 539.6,331.2 542.0,339.4 545.5,329.1 549.0,317.0 553.8,322.9 556.8,319.6 559.7,317.0 562.5,322.0 565.2,324.5 568.0,328.8 570.4,338.3 575.0,330.0 578.7,346.5 582.0,341.8 585.6,357.4 589.3,370.0 592.8,367.6 596.4,363.0 600.0,368.6 603.6,360.7 607.3,356.0 611.0,357.2 614.6,360.3 618.7,359.3 621.8,367.6 625.0,371.8 628.1,361.6 631.2,348.8 634.3,337.4 638.5,344.7 641.6,344.7 644.2,352.5 646.8,357.2 651.0,347.8 653.0,349.9 656.2,343.7 658.8,342.3 661.4,341.6 665.5,351.0 668.1,338.6 670.7,329.0 673.9,325.8 677.0,321.8 680.0,345.8 682.6,339.9 685.3,332.2 688.4,339.5 691.2,338.8 693.9,338.2 696.7,339.5 700.9,336.4 703.5,341.1 706.0,346.8 710.0,341.6 712.7,343.1 715.4,341.6 716.5,354.1 719.6,381.0 722.7,389.7 725.8,396.7 730.0,370.7 732.6,365.3 735.2,362.4 737.8,364.2 740.4,367.6 743.5,362.9 746.7,359.3 749.8,357.2 752.6,356.1 755.5,352.0 758.4,351.2 761.2,348.9 764.3,360.3 767.1,365.0 769.8,369.0 772.6,374.9 775.2,382.9 777.8,389.4 782.0,384.2 785.1,386.2 788.3,390.9 791.4,393.6 794.2,391.7 796.9,391.9 799.7,391.5 802.9,383.8 806.0,378.0 809.0,371.8 811.6,379.9 814.2,389.4 817.9,380.0 821.5,367.6 824.7,374.8 827.8,379.4 831.0,386.3 835.0,378.0 838.6,376.6 842.3,372.8 844.9,375.5 847.5,380.1 851.7,371.8 854.9,370.9 858.0,370.7 861.1,364.0 864.2,355.0 867.3,356.1 870.4,356.2 874.0,364.8 877.7,375.9 880.8,366.6 884.4,371.8 888.0,373.8 891.2,365.6 894.3,358.5 897.5,352.0 900.6,356.0 903.7,358.2 906.9,349.9 910.0,342.6 913.6,341.9 917.2,342.6 921.4,360.3 925.5,369.7 929.1,363.6 932.8,360.3 935.5,358.7 938.3,359.9 941.0,359.3 943.5,356.6 946.0,355.9 948.6,353.2 951.1,351.6 953.6,349.9 957.8,337.4 960.9,357.6 964.0,374.9 967.0,356.2 971.3,367.6 974.4,356.2 977.2,357.2 979.9,358.5 982.7,359.3 985.5,356.3 988.2,350.0 991.0,346.8 994.1,343.1 997.3,341.6 1000.4,351.8 1003.5,359.3 1006.6,351.0 1009.2,363.4 1011.8,373.8 1014.9,361.6 1018.0,351.0 1021.2,354.1 1023.8,354.2 1026.4,356.2 1029.0,355.4 1031.6,353.0 1035.2,351.3 1038.9,346.8 1043.0,356.2 1046.7,362.5 1050.3,370.7 1052.9,376.3 1055.5,379.0 1058.6,362.4 1061.8,379.0 1064.4,382.3 1067.0,383.2 1071.1,389.4 1075.3,380.1 1078.4,380.4 1081.5,380.1 1084.3,375.3 1087.0,369.8 1089.8,366.6 1093.4,372.4 1097.1,381.1 1100.2,376.0 1103.4,367.1 1106.5,361.4 1109.6,369.7 1112.7,341.6 1114.8,330.0 1117.4,331.0 1120.0,329.8 1122.6,331.9 1125.2,331.2 1127.8,331.0 1130.4,329.5 1133.0,328.6 1135.6,329.1 1138.7,330.5 1141.9,329.1 1145.0,331.2 1147.6,326.2 1150.2,322.9 1154.3,347.8 1157.4,336.0 1160.6,323.9 1164.7,337.4 1167.5,340.3 1170.2,341.2 1173.0,342.6 1175.6,340.9 1178.2,341.9 1180.8,338.6 1183.4,338.5 1186.6,347.8 1189.2,343.7 1191.8,342.6 1194.5,336.3 1197.3,331.4 1200.0,326.0 1204.2,336.4 1208.4,333.3 1212.1,344.9 1215.7,359.3 1219.8,340.6 1222.4,342.2 1225.0,345.8 1228.2,344.3 1231.3,343.7 1234.4,348.9 1237.5,346.5 1240.6,343.7 1244.8,330.2 1249.0,344.7 1253.1,365.5 1256.2,353.9 1259.4,344.7 1263.1,353.1 1266.7,362.4 1269.8,361.1 1272.9,358.7 1276.0,355.1 1279.1,352.0 1281.9,356.4 1284.7,359.9 1287.5,363.4 1290.1,359.6 1292.7,358.2 1295.8,372.8 1298.9,358.8 1302.0,347.8 1305.7,340.6 1309.3,336.4 1312.4,343.7 1315.3,344.2 1318.2,342.7 1321.2,342.7 1324.1,338.8 1327.0,339.5 1329.6,342.3 1332.2,344.1 1334.8,347.3 1337.4,348.9 1340.5,336.9 1343.6,326.0 1346.8,338.0 1349.9,346.8 1353.0,349.1 1356.1,354.2 1359.2,358.5 1362.3,361.4 1365.1,362.7 1367.8,362.2 1370.6,361.4 1373.2,354.3 1375.9,345.8 1378.5,347.2 1381.0,346.8 1384.0,357.0 1386.9,364.5 1389.9,349.8 1392.9,336.1 1395.5,335.3 1398.1,330.7 1400.7,325.0 1405.0,327.5 1409.3,337.0 1412.7,331.8 1415.3,332.7 1417.9,331.0 1420.5,330.9 1423.0,328.4 1426.0,332.9 1429.0,337.9 1432.5,335.3 1436.0,325.0 1437.7,325.8 1439.4,350.0 1441.1,361.0 1444.5,353.4 1447.1,362.0 1449.7,368.8 1452.7,373.9 1455.7,376.6 1458.3,373.1 1461.3,374.6 1464.3,375.7 1467.3,371.8 1470.4,367.1 1472.9,368.8 1475.5,360.2 1479.8,363.7 1481.5,358.5 1485.0,374.0 1488.4,403.3 1490.2,401.5 1492.8,387.8 1495.3,374.9 1499.6,374.9 1503.9,382.6 1507.3,383.7 1510.8,384.3 1514.2,380.9 1517.7,382.6 1521.1,388.6 1524.6,380.9 1527.6,378.6 1530.6,375.7 1534.9,386.9 1539.2,358.5" fill="none" stroke="#1e90ff" stroke-width="0.9"/>
<path d="M220 13h7l-3.5 4z" fill="#fff"/>
<text transform="translate(232 18) scale(0.973 1)" font-size="9.5" fill="#fff" stroke="#fff" stroke-width="0.3" >GBPUSD,H1&#160;&#160;1.41965 1.42262 1.41846 1.42188</text>
<path d="M1536.5 7h10l-5 5z" fill="#778899"/>
<text x="227" y="40" font-size="13" fill="#ff00ff">Flexi High low</text>
<text x="227" y="55" font-size="13" fill="#00ffff">Today High</text>
<text x="377" y="55" font-size="12" fill="#00ffff">:</text>
<text transform="translate(432 55) scale(0.94 1)" font-size="13" fill="#00ffff" text-anchor="end">1.42262</text>
<text x="227" y="70" font-size="13" fill="#00ffff">Today Low</text>
<text x="377" y="70" font-size="12" fill="#00ffff">:</text>
<text transform="translate(432 70) scale(0.94 1)" font-size="13" fill="#00ffff" text-anchor="end">1.41601</text>
<text x="227" y="85" font-size="13" fill="#00ffff">Yesterday High</text>
<text x="377" y="85" font-size="12" fill="#00ffff">:</text>
<text transform="translate(432 85) scale(0.94 1)" font-size="13" fill="#00ffff" text-anchor="end">1.43140</text>
<text x="227" y="100" font-size="13" fill="#00ffff">Yesterday Low</text>
<text x="377" y="100" font-size="12" fill="#00ffff">:</text>
<text transform="translate(432 100) scale(0.94 1)" font-size="13" fill="#00ffff" text-anchor="end">1.41724</text>
<text x="227" y="115" font-size="13" fill="#00ffff">Last Week High</text>
<text x="377" y="115" font-size="12" fill="#00ffff">:</text>
<text transform="translate(432 115) scale(0.94 1)" font-size="13" fill="#00ffff" text-anchor="end">1.42958</text>
<text x="227" y="130" font-size="13" fill="#00ffff">Last Week Low</text>
<text x="377" y="130" font-size="12" fill="#00ffff">:</text>
<text transform="translate(432 130) scale(0.94 1)" font-size="13" fill="#00ffff" text-anchor="end">1.40729</text>
<text x="227" y="145" font-size="13" fill="#00ffff">Last Month High</text>
<text x="377" y="145" font-size="12" fill="#00ffff">:</text>
<text transform="translate(432 145) scale(0.94 1)" font-size="13" fill="#00ffff" text-anchor="end">1.42440</text>
<text x="227" y="160" font-size="13" fill="#00ffff">Last Month Low</text>
<text x="377" y="160" font-size="12" fill="#00ffff">:</text>
<text transform="translate(432 160) scale(0.94 1)" font-size="13" fill="#00ffff" text-anchor="end">1.37109</text>
<text x="227" y="175" font-size="13" fill="#00ffff">This Year High</text>
<text x="377" y="175" font-size="12" fill="#00ffff">:</text>
<text transform="translate(432 175) scale(0.94 1)" font-size="13" fill="#00ffff" text-anchor="end">1.43761</text>
<text x="227" y="190" font-size="13" fill="#00ffff">This Year Low</text>
<text x="377" y="190" font-size="12" fill="#00ffff">:</text>
<text transform="translate(432 190) scale(0.94 1)" font-size="13" fill="#00ffff" text-anchor="end">1.34572</text>
<text transform="translate(223 111) scale(1.0 1)" font-size="9" fill="#fff" font-weight="bold">#20216592 sell 0.16</text>
<text transform="translate(223 121) scale(1.0 1)" font-size="9" fill="#fff" font-weight="bold">#20213387 sell 0.10</text>
<text transform="translate(223 124) scale(1.0 1)" font-size="9" fill="#fff" font-weight="bold">#20216908 0.16</text>
<rect x="1876" y="119" width="3" height="1" fill="#fff" shape-rendering="crispEdges"/>
<text transform="translate(1881 123.2) scale(0.94 1)" font-size="9.5" fill="#fff" stroke="#fff" stroke-width="0.3" >1.41850</text>
<rect x="1876" y="152" width="3" height="1" fill="#fff" shape-rendering="crispEdges"/>
<text transform="translate(1881 155.2) scale(0.94 1)" font-size="9.5" fill="#fff" stroke="#fff" stroke-width="0.3" >1.41220</text>
<rect x="1876" y="185" width="3" height="1" fill="#fff" shape-rendering="crispEdges"/>
<text transform="translate(1881 188.2) scale(0.94 1)" font-size="9.5" fill="#fff" stroke="#fff" stroke-width="0.3" >1.40575</text>
<rect x="1876" y="218" width="3" height="1" fill="#fff" shape-rendering="crispEdges"/>
<text transform="translate(1881 221.2) scale(0.94 1)" font-size="9.5" fill="#fff" stroke="#fff" stroke-width="0.3" >1.39930</text>
<rect x="1876" y="250" width="3" height="1" fill="#fff" shape-rendering="crispEdges"/>
<text transform="translate(1881 254.2) scale(0.94 1)" font-size="9.5" fill="#fff" stroke="#fff" stroke-width="0.3" >1.39300</text>
<rect x="1876" y="284" width="3" height="1" fill="#fff" shape-rendering="crispEdges"/>
<text transform="translate(1881 287.2) scale(0.94 1)" font-size="9.5" fill="#fff" stroke="#fff" stroke-width="0.3" >1.38655</text>
<rect x="1877" y="96" width="41" height="11" fill="#fff" shape-rendering="crispEdges"/>
<text transform="translate(1881 105.2) scale(0.94 1)" font-size="9.5" fill="#fff" stroke="#fff" stroke-width="0.3" >1.42188</text>
<rect x="1877" y="15" width="41" height="11" fill="#0000ff" shape-rendering="crispEdges"/>
<text transform="translate(1881 24.2) scale(0.94 1)" font-size="9.5" fill="#000" stroke="#000" stroke-width="0.3" >1.43761</text>
<rect x="1877" y="47" width="41" height="11" fill="#0000ff" shape-rendering="crispEdges"/>
<text transform="translate(1881 56.2) scale(0.94 1)" font-size="9.5" fill="#000" stroke="#000" stroke-width="0.3" >1.43140</text>
<rect x="1877" y="56" width="41" height="11" fill="#0000ff" shape-rendering="crispEdges"/>
<text transform="translate(1881 66.2) scale(0.94 1)" font-size="9.5" fill="#000" stroke="#000" stroke-width="0.3" >1.42958</text>
<rect x="1877" y="83" width="41" height="11" fill="#0000ff" shape-rendering="crispEdges"/>
<text transform="translate(1881 92.2) scale(0.94 1)" font-size="9.5" fill="#000" stroke="#000" stroke-width="0.3" >1.42440</text>
<rect x="1877" y="92" width="41" height="11" fill="#0000ff" shape-rendering="crispEdges"/>
<text transform="translate(1881 101.2) scale(0.94 1)" font-size="9.5" fill="#000" stroke="#000" stroke-width="0.3" >1.42262</text>
<rect x="1877" y="120" width="41" height="11" fill="#ff0000" shape-rendering="crispEdges"/>
<text transform="translate(1881 129.2) scale(0.94 1)" font-size="9.5" fill="#000" stroke="#000" stroke-width="0.3" >1.41724</text>
<rect x="1877" y="126" width="41" height="11" fill="#ff0000" shape-rendering="crispEdges"/>
<text transform="translate(1881 135.2) scale(0.94 1)" font-size="9.5" fill="#000" stroke="#000" stroke-width="0.3" >1.41601</text>
<rect x="1877" y="171" width="41" height="11" fill="#ff0000" shape-rendering="crispEdges"/>
<text transform="translate(1881 180.2) scale(0.94 1)" font-size="9.5" fill="#000" stroke="#000" stroke-width="0.3" >1.40729</text>
<text transform="translate(221 302) scale(0.965 1)" font-size="9.5" fill="#fff" stroke="#fff" stroke-width="0.3" >RSI(14) 51.8922</text>
<text transform="translate(1880 300.6) scale(0.955 1)" font-size="9.5" fill="#fff" stroke="#fff" stroke-width="0.3" >100</text>
<rect x="1876" y="297" width="3" height="1" fill="#fff" shape-rendering="crispEdges"/>
<text transform="translate(1880 336.6) scale(0.955 1)" font-size="9.5" fill="#fff" stroke="#fff" stroke-width="0.3" >70</text>
<rect x="1876" y="333" width="3" height="1" fill="#fff" shape-rendering="crispEdges"/>
<text transform="translate(1880 390.6) scale(0.955 1)" font-size="9.5" fill="#fff" stroke="#fff" stroke-width="0.3" >30</text>
<rect x="1876" y="387" width="3" height="1" fill="#fff" shape-rendering="crispEdges"/>
<text transform="translate(1880 425.6) scale(0.955 1)" font-size="9.5" fill="#fff" stroke="#fff" stroke-width="0.3" >0</text>
<rect x="1876" y="422" width="3" height="1" fill="#fff" shape-rendering="crispEdges"/>
<rect x="217" y="429" width="1" height="4" fill="#fff" shape-rendering="crispEdges"/>
<text transform="translate(216 442) scale(0.965 1)" font-size="9.5" fill="#fff" stroke="#fff" stroke-width="0.3" >12 Mar 2018</text>
<rect x="281" y="429" width="1" height="4" fill="#fff" shape-rendering="crispEdges"/>
<text transform="translate(280 442) scale(0.965 1)" font-size="9.5" fill="#fff" stroke="#fff" stroke-width="0.3" >14 Mar 06:00</text>
<rect x="345" y="429" width="1" height="4" fill="#fff" shape-rendering="crispEdges"/>
<text transform="translate(344 442) scale(0.965 1)" font-size="9.5" fill="#fff" stroke="#fff" stroke-width="0.3" >15 Mar 14:00</text>
<rect x="409" y="429" width="1" height="4" fill="#fff" shape-rendering="crispEdges"/>
<text transform="translate(408 442) scale(0.965 1)" font-size="9.5" fill="#fff" stroke="#fff" stroke-width="0.3" >16 Mar 22:00</text>
<rect x="473" y="429" width="1" height="4" fill="#fff" shape-rendering="crispEdges"/>
<text transform="translate(472 442) scale(0.965 1)" font-size="9.5" fill="#fff" stroke="#fff" stroke-width="0.3" >20 Mar 07:00</text>
<rect x="537" y="429" width="1" height="4" fill="#fff" shape-rendering="crispEdges"/>
<text transform="translate(536 442) scale(0.965 1)" font-size="9.5" fill="#fff" stroke="#fff" stroke-width="0.3" >21 Mar 15:00</text>
<rect x="601" y="429" width="1" height="4" fill="#fff" shape-rendering="crispEdges"/>
<text transform="translate(600 442) scale(0.965 1)" font-size="9.5" fill="#fff" stroke="#fff" stroke-width="0.3" >22 Mar 23:00</text>
<rect x="665" y="429" width="1" height="4" fill="#fff" shape-rendering="crispEdges"/>
<text transform="translate(664 442) scale(0.965 1)" font-size="9.5" fill="#fff" stroke="#fff" stroke-width="0.3" >26 Mar 08:00</text>
<rect x="729" y="429" width="1" height="4" fill="#fff" shape-rendering="crispEdges"/>
<text transform="translate(728 442) scale(0.965 1)" font-size="9.5" fill="#fff" stroke="#fff" stroke-width="0.3" >27 Mar 16:00</text>
<rect x="793" y="429" width="1" height="4" fill="#fff" shape-rendering="crispEdges"/>
<text transform="translate(792 442) scale(0.965 1)" font-size="9.5" fill="#fff" stroke="#fff" stroke-width="0.3" >29 Mar 00:00</text>
<rect x="857" y="429" width="1" height="4" fill="#fff" shape-rendering="crispEdges"/>
<text transform="translate(856 442) scale(0.965 1)" font-size="9.5" fill="#fff" stroke="#fff" stroke-width="0.3" >30 Mar 08:00</text>
<rect x="921" y="429" width="1" height="4" fill="#fff" shape-rendering="crispEdges"/>
<text transform="translate(920 442) scale(0.965 1)" font-size="9.5" fill="#fff" stroke="#fff" stroke-width="0.3" >2 Apr 16:00</text>
<rect x="985" y="429" width="1" height="4" fill="#fff" shape-rendering="crispEdges"/>
<text transform="translate(984 442) scale(0.965 1)" font-size="9.5" fill="#fff" stroke="#fff" stroke-width="0.3" >4 Apr 00:00</text>
<rect x="1049" y="429" width="1" height="4" fill="#fff" shape-rendering="crispEdges"/>
<text transform="translate(1048 442) scale(0.965 1)" font-size="9.5" fill="#fff" stroke="#fff" stroke-width="0.3" >5 Apr 08:00</text>
<rect x="1113" y="429" width="1" height="4" fill="#fff" shape-rendering="crispEdges"/>
<text transform="translate(1112 442) scale(0.965 1)" font-size="9.5" fill="#fff" stroke="#fff" stroke-width="0.3" >6 Apr 16:00</text>
<rect x="1177" y="429" width="1" height="4" fill="#fff" shape-rendering="crispEdges"/>
<text transform="translate(1176 442) scale(0.965 1)" font-size="9.5" fill="#fff" stroke="#fff" stroke-width="0.3" >10 Apr 00:00</text>
<rect x="1241" y="429" width="1" height="4" fill="#fff" shape-rendering="crispEdges"/>
<text transform="translate(1240 442) scale(0.965 1)" font-size="9.5" fill="#fff" stroke="#fff" stroke-width="0.3" >11 Apr 08:00</text>
<rect x="1305" y="429" width="1" height="4" fill="#fff" shape-rendering="crispEdges"/>
<text transform="translate(1304 442) scale(0.965 1)" font-size="9.5" fill="#fff" stroke="#fff" stroke-width="0.3" >12 Apr 16:00</text>
<rect x="1369" y="429" width="1" height="4" fill="#fff" shape-rendering="crispEdges"/>
<text transform="translate(1368 442) scale(0.965 1)" font-size="9.5" fill="#fff" stroke="#fff" stroke-width="0.3" >16 Apr 00:00</text>
<rect x="1433" y="429" width="1" height="4" fill="#fff" shape-rendering="crispEdges"/>
<text transform="translate(1432 442) scale(0.965 1)" font-size="9.5" fill="#fff" stroke="#fff" stroke-width="0.3" >17 Apr 08:00</text>
<rect x="1497" y="429" width="1" height="4" fill="#fff" shape-rendering="crispEdges"/>
<text transform="translate(1496 442) scale(0.965 1)" font-size="9.5" fill="#fff" stroke="#fff" stroke-width="0.3" >18 Apr 16:00</text>
</svg>
<div style="position:absolute;left:212px;top:450px;width:1711px;height:2px;background:#fff"></div>
<div style="position:absolute;left:212px;top:452px;width:1708px;height:1px;background:#000"></div>
<div style="position:absolute;left:213px;top:452px;width:1px;height:19px;background:#606060"></div>
<div class="t" style="position:absolute;left:229px;top:455px;white-space:nowrap;color:#444;letter-spacing:-0.6px">GBPUSD,H1</div>
<div style="position:absolute;left:298px;top:455px;width:1px;height:14px;background:#404040"></div>
<div class="t" style="position:absolute;left:308px;top:455px;white-space:nowrap;color:#444;letter-spacing:-0.6px">NZDUSD,M1</div>
<div style="position:absolute;left:378px;top:455px;width:1px;height:14px;background:#404040"></div>
<div class="t" style="position:absolute;left:388px;top:455px;white-space:nowrap;color:#444;letter-spacing:-0.6px">USDJPY,H1</div>
<div style="position:absolute;left:454px;top:455px;width:1px;height:14px;background:#404040"></div>
<div class="t" style="position:absolute;left:464px;top:455px;white-space:nowrap;color:#444;letter-spacing:-0.6px">USDCHF,H1</div>
<div style="position:absolute;left:534px;top:455px;width:1px;height:14px;background:#404040"></div>
<div class="t" style="position:absolute;left:544px;top:455px;white-space:nowrap;color:#444;letter-spacing:-0.6px">EURUSD,H1</div>
<div style="position:absolute;left:614px;top:455px;width:1px;height:14px;background:#404040"></div>
<div class="t" style="position:absolute;left:624px;top:455px;white-space:nowrap;color:#444;letter-spacing:-0.6px">EURUSD,H1</div>
<div style="position:absolute;left:694px;top:452px;width:81px;height:19px;background:#fff;border:1px solid #000;border-top:none;box-sizing:border-box"></div>
<div class="t" style="position:absolute;left:706px;top:455px;white-space:nowrap;letter-spacing:-0.6px">GBPUSD,H1</div>
<div class="t" style="position:absolute;left:786px;top:455px;white-space:nowrap;color:#444;letter-spacing:-0.6px">NZDUSD,H1</div>
<div style="position:absolute;left:854px;top:455px;width:1px;height:14px;background:#404040"></div>
<svg style="left:1880px;top:452px" width="40" height="18"><path d="M11.5 5v8l-4-4z" fill="#a8a8a8"/><path d="M26.5 5v8l4-4z" fill="#a8a8a8"/></svg>
<div style="position:absolute;left:0px;top:471px;width:1920px;height:1px;background:#808080"></div>
<div style="position:absolute;left:0px;top:472px;width:1920px;height:1px;background:#fff"></div>
<div style="position:absolute;left:1px;top:490px;width:13px;height:207px;background:linear-gradient(to bottom,#a8c8ee,#5a7cb4)"></div>
<svg style="left:3px;top:478px" width="9" height="8"><path d="M1.5 1.5l5 4.5M6.5 1.5l-5 4.5" stroke="#000" stroke-width="1.7"/></svg>
<div style="position:absolute;left:15px;top:476px;width:1901px;height:1px;background:#808080"></div>
<div style="position:absolute;left:15px;top:476px;width:1px;height:221px;background:#808080"></div>
<div style="position:absolute;left:16px;top:477px;width:1900px;height:16px;background:#d4d0c8;border-top:1px solid #fff;box-sizing:border-box"></div>
<div style="position:absolute;left:16px;top:492px;width:1900px;height:1px;background:#404040"></div>
<div style="position:absolute;left:154px;top:477px;width:1px;height:16px;background:#404040"></div>
<div class="t" style="position:absolute;left:22px;top:480px;white-space:nowrap;">Order</div>
<div style="position:absolute;left:155px;top:477px;width:1px;height:16px;background:#fff"></div>
<div style="position:absolute;left:391px;top:477px;width:1px;height:16px;background:#404040"></div>
<div class="t" style="position:absolute;right:1537px;top:480px;white-space:nowrap;text-align:right;">Time</div>
<div style="position:absolute;left:392px;top:477px;width:1px;height:16px;background:#fff"></div>
<div style="position:absolute;left:498px;top:477px;width:1px;height:16px;background:#404040"></div>
<div class="t" style="position:absolute;right:1430px;top:480px;white-space:nowrap;text-align:right;">Type</div>
<div style="position:absolute;left:499px;top:477px;width:1px;height:16px;background:#fff"></div>
<div style="position:absolute;left:584px;top:477px;width:1px;height:16px;background:#404040"></div>
<div class="t" style="position:absolute;right:1344px;top:480px;white-space:nowrap;text-align:right;">Size</div>
<div style="position:absolute;left:585px;top:477px;width:1px;height:16px;background:#fff"></div>
<div style="position:absolute;left:692px;top:477px;width:1px;height:16px;background:#404040"></div>
<div class="t" style="position:absolute;right:1236px;top:480px;white-space:nowrap;text-align:right;">Symbol</div>
<div style="position:absolute;left:693px;top:477px;width:1px;height:16px;background:#fff"></div>
<div style="position:absolute;left:798px;top:477px;width:1px;height:16px;background:#404040"></div>
<div class="t" style="position:absolute;right:1130px;top:480px;white-space:nowrap;text-align:right;">Price</div>
<div style="position:absolute;left:799px;top:477px;width:1px;height:16px;background:#fff"></div>
<div style="position:absolute;left:905px;top:477px;width:1px;height:16px;background:#404040"></div>
<div class="t" style="position:absolute;right:1023px;top:480px;white-space:nowrap;text-align:right;">S / L</div>
<div style="position:absolute;left:906px;top:477px;width:1px;height:16px;background:#fff"></div>
<div style="position:absolute;left:1012px;top:477px;width:1px;height:16px;background:#404040"></div>
<div class="t" style="position:absolute;right:916px;top:480px;white-space:nowrap;text-align:right;">T / P</div>
<div style="position:absolute;left:1013px;top:477px;width:1px;height:16px;background:#fff"></div>
<div style="position:absolute;left:1249px;top:477px;width:1px;height:16px;background:#404040"></div>
<div class="t" style="position:absolute;right:679px;top:480px;white-space:nowrap;text-align:right;">Time</div>
<div style="position:absolute;left:1250px;top:477px;width:1px;height:16px;background:#fff"></div>
<div style="position:absolute;left:1356px;top:477px;width:1px;height:16px;background:#404040"></div>
<div class="t" style="position:absolute;right:572px;top:480px;white-space:nowrap;text-align:right;">Price</div>
<div style="position:absolute;left:1357px;top:477px;width:1px;height:16px;background:#fff"></div>
<div style="position:absolute;left:1463px;top:477px;width:1px;height:16px;background:#404040"></div>
<div class="t" style="position:absolute;right:465px;top:480px;white-space:nowrap;text-align:right;">Swap</div>
<div style="position:absolute;left:1464px;top:477px;width:1px;height:16px;background:#fff"></div>
<div style="position:absolute;left:1581px;top:477px;width:1px;height:16px;background:#404040"></div>
<div class="t" style="position:absolute;right:347px;top:480px;white-space:nowrap;text-align:right;">Profit</div>
<div style="position:absolute;left:1582px;top:477px;width:1px;height:16px;background:#fff"></div>
<div style="position:absolute;left:1915px;top:477px;width:1px;height:16px;background:#404040"></div>
<div class="t" style="position:absolute;right:13px;top:480px;white-space:nowrap;text-align:right;">Comment</div>
<svg style="left:62px;top:480px" width="10" height="9"><path d="M1 8.5h8l-4-8z" fill="#fff" stroke="#a0a0a0"/></svg>
<div style="position:absolute;left:16px;top:494px;width:1900px;height:20px;background:#fff"></div>
<div style="position:absolute;left:16px;top:514px;width:1900px;height:20px;background:#ebebeb"></div>
<div style="position:absolute;left:16px;top:534px;width:1900px;height:20px;background:#fff"></div>
<div style="position:absolute;left:16px;top:554px;width:1900px;height:20px;background:#ebebeb"></div>
<div style="position:absolute;left:16px;top:574px;width:1900px;height:20px;background:#fff"></div>
<div style="position:absolute;left:16px;top:594px;width:1900px;height:20px;background:#ebebeb"></div>
<div style="position:absolute;left:16px;top:614px;width:1900px;height:20px;background:#fff"></div>
<div style="position:absolute;left:16px;top:634px;width:1900px;height:20px;background:#ebebeb"></div>
<div style="position:absolute;left:16px;top:654px;width:1900px;height:20px;background:#fff"></div>
<div style="position:absolute;left:16px;top:514px;width:1900px;height:1px;background:#d4d4d4"></div>
<div style="position:absolute;left:154px;top:494px;width:1px;height:20px;background:#d4d4d4"></div>
<svg style="left:18px;top:496px" width="17" height="17" viewBox="0 0 17 17"><defs><linearGradient id="dg0" x1="0" y1="0" x2="1" y2="1"><stop offset="0" stop-color="#ffffff"/><stop offset="1" stop-color="#dcdcdc"/></linearGradient><radialGradient id="og0" cx="0.35" cy="0.3" r="0.8"><stop offset="0" stop-color="#ffa070"/><stop offset="1" stop-color="#d02a00"/></radialGradient></defs><path d="M1.8 1.5h7.4l3.3 3.3v9.4h-10.7z" fill="url(#dg0)" stroke="#5a5a5a" stroke-width="1" stroke-linejoin="round"/><path d="M9.2 1.5v3.3h3.3z" fill="#5a5a5a"/><circle cx="11.8" cy="12.3" r="3.4" fill="url(#og0)" stroke="#8a2000" stroke-width="0.6"/></svg>
<div class="t" style="position:absolute;left:38px;top:498px;white-space:nowrap;">20154888</div>
<div style="position:absolute;left:391px;top:494px;width:1px;height:20px;background:#d4d4d4"></div>
<div class="t" style="position:absolute;right:1535px;top:498px;white-space:nowrap;text-align:right;">2018.04.18 12:00:00</div>
<div style="position:absolute;left:498px;top:494px;width:1px;height:20px;background:#d4d4d4"></div>
<div class="t" style="position:absolute;right:1428px;top:498px;white-space:nowrap;text-align:right;">sell</div>
<div style="position:absolute;left:584px;top:494px;width:1px;height:20px;background:#d4d4d4"></div>
<div class="t" style="position:absolute;right:1342px;top:498px;white-space:nowrap;text-align:right;">0.10</div>
<div style="position:absolute;left:692px;top:494px;width:1px;height:20px;background:#d4d4d4"></div>
<div class="t" style="position:absolute;right:1234px;top:498px;white-space:nowrap;text-align:right;">gbpusd</div>
<div style="position:absolute;left:798px;top:494px;width:1px;height:20px;background:#d4d4d4"></div>
<div class="t" style="position:absolute;right:1128px;top:498px;white-space:nowrap;text-align:right;">1.41913</div>
<div style="position:absolute;left:905px;top:494px;width:1px;height:20px;background:#d4d4d4"></div>
<div class="t" style="position:absolute;right:1021px;top:498px;white-space:nowrap;text-align:right;">0.00000</div>
<div style="position:absolute;left:1012px;top:494px;width:1px;height:20px;background:#d4d4d4"></div>
<div style="position:absolute;left:907px;top:495px;width:104px;height:18px;background:#62ee62"></div>
<div class="t" style="position:absolute;right:914px;top:498px;white-space:nowrap;text-align:right;">1.41864</div>
<div style="position:absolute;left:1249px;top:494px;width:1px;height:20px;background:#d4d4d4"></div>
<div class="t" style="position:absolute;right:677px;top:498px;white-space:nowrap;text-align:right;">2018.04.19 04:56:50</div>
<div style="position:absolute;left:1356px;top:494px;width:1px;height:20px;background:#d4d4d4"></div>
<div class="t" style="position:absolute;right:570px;top:498px;white-space:nowrap;text-align:right;">1.41864</div>
<div style="position:absolute;left:1463px;top:494px;width:1px;height:20px;background:#d4d4d4"></div>
<div class="t" style="position:absolute;right:463px;top:498px;white-space:nowrap;text-align:right;">0.12</div>
<div style="position:absolute;left:1581px;top:494px;width:1px;height:20px;background:#d4d4d4"></div>
<div class="t" style="position:absolute;right:345px;top:498px;white-space:nowrap;text-align:right;">4.90</div>
<div style="position:absolute;left:1915px;top:494px;width:1px;height:20px;background:#d4d4d4"></div>
<div class="t" style="position:absolute;right:11px;top:498px;white-space:nowrap;text-align:right;">VantagePointX one: Basket# 0[tp</div>
<div style="position:absolute;left:16px;top:534px;width:1900px;height:1px;background:#d4d4d4"></div>
<div style="position:absolute;left:154px;top:514px;width:1px;height:20px;background:#d4d4d4"></div>
<svg style="left:18px;top:516px" width="17" height="17" viewBox="0 0 17 17"><defs><linearGradient id="dg1" x1="0" y1="0" x2="1" y2="1"><stop offset="0" stop-color="#ffffff"/><stop offset="1" stop-color="#dcdcdc"/></linearGradient><radialGradient id="og1" cx="0.35" cy="0.3" r="0.8"><stop offset="0" stop-color="#ffa070"/><stop offset="1" stop-color="#d02a00"/></radialGradient></defs><path d="M1.8 1.5h7.4l3.3 3.3v9.4h-10.7z" fill="url(#dg1)" stroke="#5a5a5a" stroke-width="1" stroke-linejoin="round"/><path d="M9.2 1.5v3.3h3.3z" fill="#5a5a5a"/><circle cx="11.8" cy="12.3" r="3.4" fill="url(#og1)" stroke="#8a2000" stroke-width="0.6"/></svg>
<div class="t" style="position:absolute;left:38px;top:518px;white-space:nowrap;">20164168</div>
<div style="position:absolute;left:391px;top:514px;width:1px;height:20px;background:#d4d4d4"></div>
<div class="t" style="position:absolute;right:1535px;top:518px;white-space:nowrap;text-align:right;">2018.04.18 15:00:00</div>
<div style="position:absolute;left:498px;top:514px;width:1px;height:20px;background:#d4d4d4"></div>
<div class="t" style="position:absolute;right:1428px;top:518px;white-space:nowrap;text-align:right;">sell</div>
<div style="position:absolute;left:584px;top:514px;width:1px;height:20px;background:#d4d4d4"></div>
<div class="t" style="position:absolute;right:1342px;top:518px;white-space:nowrap;text-align:right;">0.16</div>
<div style="position:absolute;left:692px;top:514px;width:1px;height:20px;background:#d4d4d4"></div>
<div class="t" style="position:absolute;right:1234px;top:518px;white-space:nowrap;text-align:right;">gbpusd</div>
<div style="position:absolute;left:798px;top:514px;width:1px;height:20px;background:#d4d4d4"></div>
<div class="t" style="position:absolute;right:1128px;top:518px;white-space:nowrap;text-align:right;">1.42159</div>
<div style="position:absolute;left:905px;top:514px;width:1px;height:20px;background:#d4d4d4"></div>
<div class="t" style="position:absolute;right:1021px;top:518px;white-space:nowrap;text-align:right;">0.00000</div>
<div style="position:absolute;left:1012px;top:514px;width:1px;height:20px;background:#d4d4d4"></div>
<div style="position:absolute;left:907px;top:515px;width:104px;height:18px;background:#62ee62"></div>
<div class="t" style="position:absolute;right:914px;top:518px;white-space:nowrap;text-align:right;">1.41864</div>
<div style="position:absolute;left:1249px;top:514px;width:1px;height:20px;background:#d4d4d4"></div>
<div class="t" style="position:absolute;right:677px;top:518px;white-space:nowrap;text-align:right;">2018.04.19 04:56:50</div>
<div style="position:absolute;left:1356px;top:514px;width:1px;height:20px;background:#d4d4d4"></div>
<div class="t" style="position:absolute;right:570px;top:518px;white-space:nowrap;text-align:right;">1.41864</div>
<div style="position:absolute;left:1463px;top:514px;width:1px;height:20px;background:#d4d4d4"></div>
<div class="t" style="position:absolute;right:463px;top:518px;white-space:nowrap;text-align:right;">0.19</div>
<div style="position:absolute;left:1581px;top:514px;width:1px;height:20px;background:#d4d4d4"></div>
<div class="t" style="position:absolute;right:345px;top:518px;white-space:nowrap;text-align:right;">47.20</div>
<div style="position:absolute;left:1915px;top:514px;width:1px;height:20px;background:#d4d4d4"></div>
<div class="t" style="position:absolute;right:11px;top:518px;white-space:nowrap;text-align:right;">VantagePointX one: Basket# 1[tp</div>
<div style="position:absolute;left:16px;top:554px;width:1900px;height:1px;background:#d4d4d4"></div>
<div style="position:absolute;left:154px;top:534px;width:1px;height:20px;background:#d4d4d4"></div>
<svg style="left:18px;top:536px" width="17" height="17" viewBox="0 0 17 17"><defs><linearGradient id="dg2" x1="0" y1="0" x2="1" y2="1"><stop offset="0" stop-color="#ffffff"/><stop offset="1" stop-color="#dcdcdc"/></linearGradient><radialGradient id="og2" cx="0.35" cy="0.3" r="0.8"><stop offset="0" stop-color="#9ad8ff"/><stop offset="1" stop-color="#0a6ad0"/></radialGradient></defs><path d="M1.8 1.5h7.4l3.3 3.3v9.4h-10.7z" fill="url(#dg2)" stroke="#5a5a5a" stroke-width="1" stroke-linejoin="round"/><path d="M9.2 1.5v3.3h3.3z" fill="#5a5a5a"/><circle cx="11.8" cy="12.3" r="3.4" fill="url(#og2)" stroke="#104a90" stroke-width="0.6"/></svg>
<div class="t" style="position:absolute;left:38px;top:538px;white-space:nowrap;">20166841</div>
<div style="position:absolute;left:391px;top:534px;width:1px;height:20px;background:#d4d4d4"></div>
<div class="t" style="position:absolute;right:1535px;top:538px;white-space:nowrap;text-align:right;">2018.04.18 16:00:01</div>
<div style="position:absolute;left:498px;top:534px;width:1px;height:20px;background:#d4d4d4"></div>
<div class="t" style="position:absolute;right:1428px;top:538px;white-space:nowrap;text-align:right;">buy</div>
<div style="position:absolute;left:584px;top:534px;width:1px;height:20px;background:#d4d4d4"></div>
<div class="t" style="position:absolute;right:1342px;top:538px;white-space:nowrap;text-align:right;">0.10</div>
<div style="position:absolute;left:692px;top:534px;width:1px;height:20px;background:#d4d4d4"></div>
<div class="t" style="position:absolute;right:1234px;top:538px;white-space:nowrap;text-align:right;">gbpusd</div>
<div style="position:absolute;left:798px;top:534px;width:1px;height:20px;background:#d4d4d4"></div>
<div class="t" style="position:absolute;right:1128px;top:538px;white-space:nowrap;text-align:right;">1.42381</div>
<div style="position:absolute;left:905px;top:534px;width:1px;height:20px;background:#d4d4d4"></div>
<div class="t" style="position:absolute;right:1021px;top:538px;white-space:nowrap;text-align:right;">0.00000</div>
<div style="position:absolute;left:1012px;top:534px;width:1px;height:20px;background:#d4d4d4"></div>
<div style="position:absolute;left:907px;top:535px;width:104px;height:18px;background:#62ee62"></div>
<div class="t" style="position:absolute;right:914px;top:538px;white-space:nowrap;text-align:right;">1.42218</div>
<div style="position:absolute;left:1249px;top:534px;width:1px;height:20px;background:#d4d4d4"></div>
<div class="t" style="position:absolute;right:677px;top:538px;white-space:nowrap;text-align:right;">2018.04.19 13:44:04</div>
<div style="position:absolute;left:1356px;top:534px;width:1px;height:20px;background:#d4d4d4"></div>
<div class="t" style="position:absolute;right:570px;top:538px;white-space:nowrap;text-align:right;">1.42221</div>
<div style="position:absolute;left:1463px;top:534px;width:1px;height:20px;background:#d4d4d4"></div>
<div class="t" style="position:absolute;right:463px;top:538px;white-space:nowrap;text-align:right;">-0.85</div>
<div style="position:absolute;left:1581px;top:534px;width:1px;height:20px;background:#d4d4d4"></div>
<div class="t" style="position:absolute;right:345px;top:538px;white-space:nowrap;text-align:right;">-16.00</div>
<div style="position:absolute;left:1915px;top:534px;width:1px;height:20px;background:#d4d4d4"></div>
<div class="t" style="position:absolute;right:11px;top:538px;white-space:nowrap;text-align:right;">VantagePointX two: Basket# 0[tp</div>
<div style="position:absolute;left:16px;top:574px;width:1900px;height:1px;background:#d4d4d4"></div>
<div style="position:absolute;left:154px;top:554px;width:1px;height:20px;background:#d4d4d4"></div>
<svg style="left:18px;top:556px" width="17" height="17" viewBox="0 0 17 17"><defs><linearGradient id="dg3" x1="0" y1="0" x2="1" y2="1"><stop offset="0" stop-color="#ffffff"/><stop offset="1" stop-color="#dcdcdc"/></linearGradient><radialGradient id="og3" cx="0.35" cy="0.3" r="0.8"><stop offset="0" stop-color="#9ad8ff"/><stop offset="1" stop-color="#0a6ad0"/></radialGradient></defs><path d="M1.8 1.5h7.4l3.3 3.3v9.4h-10.7z" fill="url(#dg3)" stroke="#5a5a5a" stroke-width="1" stroke-linejoin="round"/><path d="M9.2 1.5v3.3h3.3z" fill="#5a5a5a"/><circle cx="11.8" cy="12.3" r="3.4" fill="url(#og3)" stroke="#104a90" stroke-width="0.6"/></svg>
<div class="t" style="position:absolute;left:38px;top:558px;white-space:nowrap;">20180776</div>
<div style="position:absolute;left:391px;top:554px;width:1px;height:20px;background:#d4d4d4"></div>
<div class="t" style="position:absolute;right:1535px;top:558px;white-space:nowrap;text-align:right;">2018.04.18 20:00:00</div>
<div style="position:absolute;left:498px;top:554px;width:1px;height:20px;background:#d4d4d4"></div>
<div class="t" style="position:absolute;right:1428px;top:558px;white-space:nowrap;text-align:right;">buy</div>
<div style="position:absolute;left:584px;top:554px;width:1px;height:20px;background:#d4d4d4"></div>
<div class="t" style="position:absolute;right:1342px;top:558px;white-space:nowrap;text-align:right;">0.16</div>
<div style="position:absolute;left:692px;top:554px;width:1px;height:20px;background:#d4d4d4"></div>
<div class="t" style="position:absolute;right:1234px;top:558px;white-space:nowrap;text-align:right;">gbpusd</div>
<div style="position:absolute;left:798px;top:554px;width:1px;height:20px;background:#d4d4d4"></div>
<div class="t" style="position:absolute;right:1128px;top:558px;white-space:nowrap;text-align:right;">1.42149</div>
<div style="position:absolute;left:905px;top:554px;width:1px;height:20px;background:#d4d4d4"></div>
<div class="t" style="position:absolute;right:1021px;top:558px;white-space:nowrap;text-align:right;">0.00000</div>
<div style="position:absolute;left:1012px;top:554px;width:1px;height:20px;background:#d4d4d4"></div>
<div style="position:absolute;left:907px;top:555px;width:104px;height:18px;background:#62ee62"></div>
<div class="t" style="position:absolute;right:914px;top:558px;white-space:nowrap;text-align:right;">1.42218</div>
<div style="position:absolute;left:1249px;top:554px;width:1px;height:20px;background:#d4d4d4"></div>
<div class="t" style="position:absolute;right:677px;top:558px;white-space:nowrap;text-align:right;">2018.04.19 13:44:04</div>
<div style="position:absolute;left:1356px;top:554px;width:1px;height:20px;background:#d4d4d4"></div>
<div class="t" style="position:absolute;right:570px;top:558px;white-space:nowrap;text-align:right;">1.42221</div>
<div style="position:absolute;left:1463px;top:554px;width:1px;height:20px;background:#d4d4d4"></div>
<div class="t" style="position:absolute;right:463px;top:558px;white-space:nowrap;text-align:right;">-1.36</div>
<div style="position:absolute;left:1581px;top:554px;width:1px;height:20px;background:#d4d4d4"></div>
<div class="t" style="position:absolute;right:345px;top:558px;white-space:nowrap;text-align:right;">11.52</div>
<div style="position:absolute;left:1915px;top:554px;width:1px;height:20px;background:#d4d4d4"></div>
<div class="t" style="position:absolute;right:11px;top:558px;white-space:nowrap;text-align:right;">VantagePointX two: Basket# 1[tp</div>
<div style="position:absolute;left:16px;top:594px;width:1900px;height:1px;background:#d4d4d4"></div>
<div style="position:absolute;left:154px;top:574px;width:1px;height:20px;background:#d4d4d4"></div>
<svg style="left:18px;top:576px" width="17" height="17" viewBox="0 0 17 17"><defs><linearGradient id="dg4" x1="0" y1="0" x2="1" y2="1"><stop offset="0" stop-color="#ffffff"/><stop offset="1" stop-color="#dcdcdc"/></linearGradient><radialGradient id="og4" cx="0.35" cy="0.3" r="0.8"><stop offset="0" stop-color="#ffa070"/><stop offset="1" stop-color="#d02a00"/></radialGradient></defs><path d="M1.8 1.5h7.4l3.3 3.3v9.4h-10.7z" fill="url(#dg4)" stroke="#5a5a5a" stroke-width="1" stroke-linejoin="round"/><path d="M9.2 1.5v3.3h3.3z" fill="#5a5a5a"/><circle cx="11.8" cy="12.3" r="3.4" fill="url(#og4)" stroke="#8a2000" stroke-width="0.6"/></svg>
<div class="t" style="position:absolute;left:38px;top:578px;white-space:nowrap;">20183085</div>
<div style="position:absolute;left:391px;top:574px;width:1px;height:20px;background:#d4d4d4"></div>
<div class="t" style="position:absolute;right:1535px;top:578px;white-space:nowrap;text-align:right;">2018.04.18 21:00:00</div>
<div style="position:absolute;left:498px;top:574px;width:1px;height:20px;background:#d4d4d4"></div>
<div class="t" style="position:absolute;right:1428px;top:578px;white-space:nowrap;text-align:right;">sell</div>
<div style="position:absolute;left:584px;top:574px;width:1px;height:20px;background:#d4d4d4"></div>
<div class="t" style="position:absolute;right:1342px;top:578px;white-space:nowrap;text-align:right;">0.10</div>
<div style="position:absolute;left:692px;top:574px;width:1px;height:20px;background:#d4d4d4"></div>
<div class="t" style="position:absolute;right:1234px;top:578px;white-space:nowrap;text-align:right;">gbpusd</div>
<div style="position:absolute;left:798px;top:574px;width:1px;height:20px;background:#d4d4d4"></div>
<div class="t" style="position:absolute;right:1128px;top:578px;white-space:nowrap;text-align:right;">1.42073</div>
<div style="position:absolute;left:905px;top:574px;width:1px;height:20px;background:#d4d4d4"></div>
<div class="t" style="position:absolute;right:1021px;top:578px;white-space:nowrap;text-align:right;">0.00000</div>
<div style="position:absolute;left:1012px;top:574px;width:1px;height:20px;background:#d4d4d4"></div>
<div style="position:absolute;left:907px;top:575px;width:104px;height:18px;background:#62ee62"></div>
<div class="t" style="position:absolute;right:914px;top:578px;white-space:nowrap;text-align:right;">1.41873</div>
<div style="position:absolute;left:1249px;top:574px;width:1px;height:20px;background:#d4d4d4"></div>
<div class="t" style="position:absolute;right:677px;top:578px;white-space:nowrap;text-align:right;">2018.04.19 04:54:05</div>
<div style="position:absolute;left:1356px;top:574px;width:1px;height:20px;background:#d4d4d4"></div>
<div class="t" style="position:absolute;right:570px;top:578px;white-space:nowrap;text-align:right;">1.41872</div>
<div style="position:absolute;left:1463px;top:574px;width:1px;height:20px;background:#d4d4d4"></div>
<div class="t" style="position:absolute;right:463px;top:578px;white-space:nowrap;text-align:right;">0.12</div>
<div style="position:absolute;left:1581px;top:574px;width:1px;height:20px;background:#d4d4d4"></div>
<div class="t" style="position:absolute;right:345px;top:578px;white-space:nowrap;text-align:right;">20.10</div>
<div style="position:absolute;left:1915px;top:574px;width:1px;height:20px;background:#d4d4d4"></div>
<div class="t" style="position:absolute;right:11px;top:578px;white-space:nowrap;text-align:right;">VantagePointX three: Basket# 0[</div>
<div style="position:absolute;left:16px;top:614px;width:1900px;height:1px;background:#d4d4d4"></div>
<div style="position:absolute;left:154px;top:594px;width:1px;height:20px;background:#d4d4d4"></div>
<svg style="left:18px;top:596px" width="17" height="17" viewBox="0 0 17 17"><defs><linearGradient id="dg5" x1="0" y1="0" x2="1" y2="1"><stop offset="0" stop-color="#ffffff"/><stop offset="1" stop-color="#dcdcdc"/></linearGradient><radialGradient id="og5" cx="0.35" cy="0.3" r="0.8"><stop offset="0" stop-color="#ffa070"/><stop offset="1" stop-color="#d02a00"/></radialGradient></defs><path d="M1.8 1.5h7.4l3.3 3.3v9.4h-10.7z" fill="url(#dg5)" stroke="#5a5a5a" stroke-width="1" stroke-linejoin="round"/><path d="M9.2 1.5v3.3h3.3z" fill="#5a5a5a"/><circle cx="11.8" cy="12.3" r="3.4" fill="url(#og5)" stroke="#8a2000" stroke-width="0.6"/></svg>
<div class="t" style="position:absolute;left:38px;top:598px;white-space:nowrap;">20194767</div>
<div style="position:absolute;left:391px;top:594px;width:1px;height:20px;background:#d4d4d4"></div>
<div class="t" style="position:absolute;right:1535px;top:598px;white-space:nowrap;text-align:right;">2018.04.19 05:00:00</div>
<div style="position:absolute;left:498px;top:594px;width:1px;height:20px;background:#d4d4d4"></div>
<div class="t" style="position:absolute;right:1428px;top:598px;white-space:nowrap;text-align:right;">sell</div>
<div style="position:absolute;left:584px;top:594px;width:1px;height:20px;background:#d4d4d4"></div>
<div class="t" style="position:absolute;right:1342px;top:598px;white-space:nowrap;text-align:right;">0.10</div>
<div style="position:absolute;left:692px;top:594px;width:1px;height:20px;background:#d4d4d4"></div>
<div class="t" style="position:absolute;right:1234px;top:598px;white-space:nowrap;text-align:right;">gbpusd</div>
<div style="position:absolute;left:798px;top:594px;width:1px;height:20px;background:#d4d4d4"></div>
<div class="t" style="position:absolute;right:1128px;top:598px;white-space:nowrap;text-align:right;">1.41856</div>
<div style="position:absolute;left:905px;top:594px;width:1px;height:20px;background:#d4d4d4"></div>
<div class="t" style="position:absolute;right:1021px;top:598px;white-space:nowrap;text-align:right;">0.00000</div>
<div style="position:absolute;left:1012px;top:594px;width:1px;height:20px;background:#d4d4d4"></div>
<div style="position:absolute;left:907px;top:595px;width:104px;height:18px;background:#62ee62"></div>
<div class="t" style="position:absolute;right:914px;top:598px;white-space:nowrap;text-align:right;">1.41775</div>
<div style="position:absolute;left:1249px;top:594px;width:1px;height:20px;background:#d4d4d4"></div>
<div class="t" style="position:absolute;right:677px;top:598px;white-space:nowrap;text-align:right;">2018.04.19 11:30:29</div>
<div style="position:absolute;left:1356px;top:594px;width:1px;height:20px;background:#d4d4d4"></div>
<div class="t" style="position:absolute;right:570px;top:598px;white-space:nowrap;text-align:right;">1.41773</div>
<div style="position:absolute;left:1463px;top:594px;width:1px;height:20px;background:#d4d4d4"></div>
<div class="t" style="position:absolute;right:463px;top:598px;white-space:nowrap;text-align:right;">0.00</div>
<div style="position:absolute;left:1581px;top:594px;width:1px;height:20px;background:#d4d4d4"></div>
<div class="t" style="position:absolute;right:345px;top:598px;white-space:nowrap;text-align:right;">8.30</div>
<div style="position:absolute;left:1915px;top:594px;width:1px;height:20px;background:#d4d4d4"></div>
<div class="t" style="position:absolute;right:11px;top:598px;white-space:nowrap;text-align:right;">VantagePointX one: Basket# 0[tp</div>
<div style="position:absolute;left:16px;top:634px;width:1900px;height:1px;background:#d4d4d4"></div>
<div style="position:absolute;left:154px;top:614px;width:1px;height:20px;background:#d4d4d4"></div>
<svg style="left:18px;top:616px" width="17" height="17" viewBox="0 0 17 17"><defs><linearGradient id="dg6" x1="0" y1="0" x2="1" y2="1"><stop offset="0" stop-color="#ffffff"/><stop offset="1" stop-color="#dcdcdc"/></linearGradient><radialGradient id="og6" cx="0.35" cy="0.3" r="0.8"><stop offset="0" stop-color="#ffa070"/><stop offset="1" stop-color="#d02a00"/></radialGradient></defs><path d="M1.8 1.5h7.4l3.3 3.3v9.4h-10.7z" fill="url(#dg6)" stroke="#5a5a5a" stroke-width="1" stroke-linejoin="round"/><path d="M9.2 1.5v3.3h3.3z" fill="#5a5a5a"/><circle cx="11.8" cy="12.3" r="3.4" fill="url(#og6)" stroke="#8a2000" stroke-width="0.6"/></svg>
<div class="t" style="position:absolute;left:38px;top:618px;white-space:nowrap;">20196777</div>
<div style="position:absolute;left:391px;top:614px;width:1px;height:20px;background:#d4d4d4"></div>
<div class="t" style="position:absolute;right:1535px;top:618px;white-space:nowrap;text-align:right;">2018.04.19 06:00:00</div>
<div style="position:absolute;left:498px;top:614px;width:1px;height:20px;background:#d4d4d4"></div>
<div class="t" style="position:absolute;right:1428px;top:618px;white-space:nowrap;text-align:right;">sell</div>
<div style="position:absolute;left:584px;top:614px;width:1px;height:20px;background:#d4d4d4"></div>
<div class="t" style="position:absolute;right:1342px;top:618px;white-space:nowrap;text-align:right;">0.10</div>
<div style="position:absolute;left:692px;top:614px;width:1px;height:20px;background:#d4d4d4"></div>
<div class="t" style="position:absolute;right:1234px;top:618px;white-space:nowrap;text-align:right;">gbpusd</div>
<div style="position:absolute;left:798px;top:614px;width:1px;height:20px;background:#d4d4d4"></div>
<div class="t" style="position:absolute;right:1128px;top:618px;white-space:nowrap;text-align:right;">1.41938</div>
<div style="position:absolute;left:905px;top:614px;width:1px;height:20px;background:#d4d4d4"></div>
<div class="t" style="position:absolute;right:1021px;top:618px;white-space:nowrap;text-align:right;">0.00000</div>
<div style="position:absolute;left:1012px;top:614px;width:1px;height:20px;background:#d4d4d4"></div>
<div style="position:absolute;left:907px;top:615px;width:104px;height:18px;background:#62ee62"></div>
<div class="t" style="position:absolute;right:914px;top:618px;white-space:nowrap;text-align:right;">1.41738</div>
<div style="position:absolute;left:1249px;top:614px;width:1px;height:20px;background:#d4d4d4"></div>
<div class="t" style="position:absolute;right:677px;top:618px;white-space:nowrap;text-align:right;">2018.04.19 11:31:26</div>
<div style="position:absolute;left:1356px;top:614px;width:1px;height:20px;background:#d4d4d4"></div>
<div class="t" style="position:absolute;right:570px;top:618px;white-space:nowrap;text-align:right;">1.41735</div>
<div style="position:absolute;left:1463px;top:614px;width:1px;height:20px;background:#d4d4d4"></div>
<div class="t" style="position:absolute;right:463px;top:618px;white-space:nowrap;text-align:right;">0.00</div>
<div style="position:absolute;left:1581px;top:614px;width:1px;height:20px;background:#d4d4d4"></div>
<div class="t" style="position:absolute;right:345px;top:618px;white-space:nowrap;text-align:right;">20.30</div>
<div style="position:absolute;left:1915px;top:614px;width:1px;height:20px;background:#d4d4d4"></div>
<div class="t" style="position:absolute;right:11px;top:618px;white-space:nowrap;text-align:right;">VantagePointX three: Basket# 0[</div>
<div style="position:absolute;left:16px;top:654px;width:1900px;height:1px;background:#d4d4d4"></div>
<div style="position:absolute;left:154px;top:634px;width:1px;height:20px;background:#d4d4d4"></div>
<svg style="left:18px;top:636px" width="17" height="17" viewBox="0 0 17 17"><defs><linearGradient id="dg7" x1="0" y1="0" x2="1" y2="1"><stop offset="0" stop-color="#ffffff"/><stop offset="1" stop-color="#dcdcdc"/></linearGradient><radialGradient id="og7" cx="0.35" cy="0.3" r="0.8"><stop offset="0" stop-color="#ffa070"/><stop offset="1" stop-color="#d02a00"/></radialGradient></defs><path d="M1.8 1.5h7.4l3.3 3.3v9.4h-10.7z" fill="url(#dg7)" stroke="#5a5a5a" stroke-width="1" stroke-linejoin="round"/><path d="M9.2 1.5v3.3h3.3z" fill="#5a5a5a"/><circle cx="11.8" cy="12.3" r="3.4" fill="url(#og7)" stroke="#8a2000" stroke-width="0.6"/></svg>
<div class="t" style="position:absolute;left:38px;top:638px;white-space:nowrap;">20200493</div>
<div style="position:absolute;left:391px;top:634px;width:1px;height:20px;background:#d4d4d4"></div>
<div class="t" style="position:absolute;right:1535px;top:638px;white-space:nowrap;text-align:right;">2018.04.19 08:35:42</div>
<div style="position:absolute;left:498px;top:634px;width:1px;height:20px;background:#d4d4d4"></div>
<div class="t" style="position:absolute;right:1428px;top:638px;white-space:nowrap;text-align:right;">sell</div>
<div style="position:absolute;left:584px;top:634px;width:1px;height:20px;background:#d4d4d4"></div>
<div class="t" style="position:absolute;right:1342px;top:638px;white-space:nowrap;text-align:right;">0.16</div>
<div style="position:absolute;left:692px;top:634px;width:1px;height:20px;background:#d4d4d4"></div>
<div class="t" style="position:absolute;right:1234px;top:638px;white-space:nowrap;text-align:right;">gbpusd</div>
<div style="position:absolute;left:798px;top:634px;width:1px;height:20px;background:#d4d4d4"></div>
<div class="t" style="position:absolute;right:1128px;top:638px;white-space:nowrap;text-align:right;">1.42050</div>
<div style="position:absolute;left:905px;top:634px;width:1px;height:20px;background:#d4d4d4"></div>
<div class="t" style="position:absolute;right:1021px;top:638px;white-space:nowrap;text-align:right;">0.00000</div>
<div style="position:absolute;left:1012px;top:634px;width:1px;height:20px;background:#d4d4d4"></div>
<div style="position:absolute;left:907px;top:635px;width:104px;height:18px;background:#62ee62"></div>
<div class="t" style="position:absolute;right:914px;top:638px;white-space:nowrap;text-align:right;">1.41775</div>
<div style="position:absolute;left:1249px;top:634px;width:1px;height:20px;background:#d4d4d4"></div>
<div class="t" style="position:absolute;right:677px;top:638px;white-space:nowrap;text-align:right;">2018.04.19 11:30:29</div>
<div style="position:absolute;left:1356px;top:634px;width:1px;height:20px;background:#d4d4d4"></div>
<div class="t" style="position:absolute;right:570px;top:638px;white-space:nowrap;text-align:right;">1.41773</div>
<div style="position:absolute;left:1463px;top:634px;width:1px;height:20px;background:#d4d4d4"></div>
<div class="t" style="position:absolute;right:463px;top:638px;white-space:nowrap;text-align:right;">0.00</div>
<div style="position:absolute;left:1581px;top:634px;width:1px;height:20px;background:#d4d4d4"></div>
<div class="t" style="position:absolute;right:345px;top:638px;white-space:nowrap;text-align:right;">44.32</div>
<div style="position:absolute;left:1915px;top:634px;width:1px;height:20px;background:#d4d4d4"></div>
<div class="t" style="position:absolute;right:11px;top:638px;white-space:nowrap;text-align:right;">VantagePointX one: Basket# 1[tp</div>
<div style="position:absolute;left:16px;top:674px;width:1900px;height:1px;background:#d4d4d4"></div>
<div style="position:absolute;left:154px;top:654px;width:1px;height:20px;background:#d4d4d4"></div>
<svg style="left:18px;top:656px" width="17" height="17" viewBox="0 0 17 17"><defs><linearGradient id="dg8" x1="0" y1="0" x2="1" y2="1"><stop offset="0" stop-color="#ffffff"/><stop offset="1" stop-color="#dcdcdc"/></linearGradient><radialGradient id="og8" cx="0.35" cy="0.3" r="0.8"><stop offset="0" stop-color="#9ad8ff"/><stop offset="1" stop-color="#0a6ad0"/></radialGradient></defs><path d="M1.8 1.5h7.4l3.3 3.3v9.4h-10.7z" fill="url(#dg8)" stroke="#5a5a5a" stroke-width="1" stroke-linejoin="round"/><path d="M9.2 1.5v3.3h3.3z" fill="#5a5a5a"/><circle cx="11.8" cy="12.3" r="3.4" fill="url(#og8)" stroke="#104a90" stroke-width="0.6"/></svg>
<div class="t" style="position:absolute;left:38px;top:658px;white-space:nowrap;">20213402</div>
<div style="position:absolute;left:391px;top:654px;width:1px;height:20px;background:#d4d4d4"></div>
<div class="t" style="position:absolute;right:1535px;top:658px;white-space:nowrap;text-align:right;">2018.04.19 12:00:02</div>
<div style="position:absolute;left:498px;top:654px;width:1px;height:20px;background:#d4d4d4"></div>
<div class="t" style="position:absolute;right:1428px;top:658px;white-space:nowrap;text-align:right;">buy</div>
<div style="position:absolute;left:584px;top:654px;width:1px;height:20px;background:#d4d4d4"></div>
<div class="t" style="position:absolute;right:1342px;top:658px;white-space:nowrap;text-align:right;">0.24</div>
<div style="position:absolute;left:692px;top:654px;width:1px;height:20px;background:#d4d4d4"></div>
<div class="t" style="position:absolute;right:1234px;top:658px;white-space:nowrap;text-align:right;">gbpusd</div>
<div style="position:absolute;left:798px;top:654px;width:1px;height:20px;background:#d4d4d4"></div>
<div class="t" style="position:absolute;right:1128px;top:658px;white-space:nowrap;text-align:right;">1.41780</div>
<div style="position:absolute;left:905px;top:654px;width:1px;height:20px;background:#d4d4d4"></div>
<div class="t" style="position:absolute;right:1021px;top:658px;white-space:nowrap;text-align:right;">0.00000</div>
<div style="position:absolute;left:1012px;top:654px;width:1px;height:20px;background:#d4d4d4"></div>
<div style="position:absolute;left:907px;top:655px;width:104px;height:18px;background:#62ee62"></div>
<div class="t" style="position:absolute;right:914px;top:658px;white-space:nowrap;text-align:right;">1.42218</div>
<div style="position:absolute;left:1249px;top:654px;width:1px;height:20px;background:#d4d4d4"></div>
<div class="t" style="position:absolute;right:677px;top:658px;white-space:nowrap;text-align:right;">2018.04.19 13:44:04</div>
<div style="position:absolute;left:1356px;top:654px;width:1px;height:20px;background:#d4d4d4"></div>
<div class="t" style="position:absolute;right:570px;top:658px;white-space:nowrap;text-align:right;">1.42221</div>
<div style="position:absolute;left:1463px;top:654px;width:1px;height:20px;background:#d4d4d4"></div>
<div class="t" style="position:absolute;right:463px;top:658px;white-space:nowrap;text-align:right;">0.00</div>
<div style="position:absolute;left:1581px;top:654px;width:1px;height:20px;background:#d4d4d4"></div>
<div class="t" style="position:absolute;right:345px;top:658px;white-space:nowrap;text-align:right;">105.84</div>
<div style="position:absolute;left:1915px;top:654px;width:1px;height:20px;background:#d4d4d4"></div>
<div class="t" style="position:absolute;right:11px;top:658px;white-space:nowrap;text-align:right;">VantagePointX two: Basket# 2[tp</div>
<div style="position:absolute;left:16px;top:674px;width:1900px;height:20px;background:#c8c8c8"></div>
<div style="position:absolute;left:16px;top:694px;width:1900px;height:3px;background:#fff"></div>
<svg style="left:22px;top:678px" width="12" height="12"><circle cx="6" cy="6" r="3.8" fill="#e0e0e0" stroke="#9a9a9a"/><circle cx="6" cy="6" r="1.8" fill="#a8a8a8"/></svg>
<div class="t" style="position:absolute;left:38px;top:678px;white-space:nowrap;font-weight:bold;letter-spacing:0.35px">Profit/Loss: 244.70 &nbsp;Credit: 0.00 &nbsp;Deposit: 0.00 &nbsp;Withdrawal: 0.00</div>
<div class="t" style="position:absolute;right:344px;top:678px;white-space:nowrap;text-align:right;font-weight:bold;letter-spacing:0.35px">244.70</div>
</body></html>
